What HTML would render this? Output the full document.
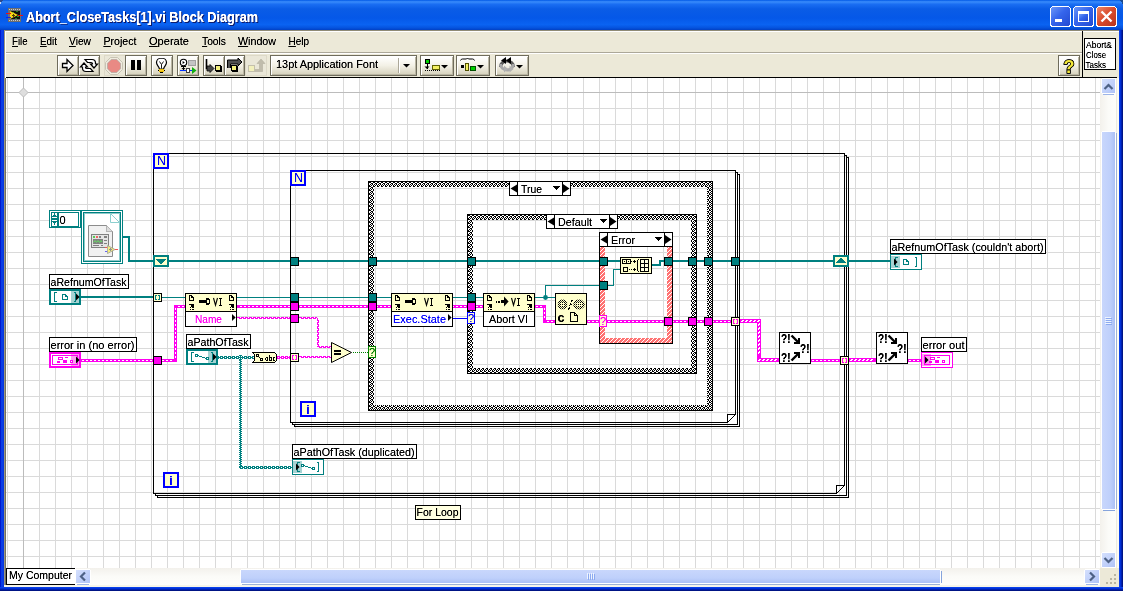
<!DOCTYPE html>
<html><head><meta charset="utf-8"><title>Abort_CloseTasks[1].vi Block Diagram</title>
<style>
html,body{margin:0;padding:0;background:#fff;overflow:hidden}
body{width:1123px;height:591px;position:relative;font-family:"Liberation Sans",sans-serif}
svg{position:absolute;left:0;top:0;font-family:"Liberation Sans",sans-serif}
svg rect{shape-rendering:crispEdges}
svg text{filter:url(#tf)}
</style></head><body>
<svg width="1123" height="591" viewBox="0 0 1123 591">
<defs>
<filter id="tf" x="-5%" y="-25%" width="110%" height="150%"><feComponentTransfer><feFuncA type="linear" slope="1.3" intercept="0"/></feComponentTransfer></filter>
<linearGradient id="tb" x1="0" y1="0" x2="0" y2="1"><stop offset="0" stop-color="#0058E6"/><stop offset="0.06" stop-color="#3A8CFB"/><stop offset="0.14" stop-color="#1A6EF2"/><stop offset="0.3" stop-color="#0A5CE6"/><stop offset="0.6" stop-color="#0558E8"/><stop offset="0.82" stop-color="#0A63F2"/><stop offset="0.93" stop-color="#0553DE"/><stop offset="1" stop-color="#0140C4"/></linearGradient>
<linearGradient id="btnb" x1="0" y1="0" x2="1" y2="1"><stop offset="0" stop-color="#6F9AF8"/><stop offset="0.45" stop-color="#3565EC"/><stop offset="1" stop-color="#2248D0"/></linearGradient>
<linearGradient id="btnr" x1="0" y1="0" x2="1" y2="1"><stop offset="0" stop-color="#EE8A6C"/><stop offset="0.5" stop-color="#D8492A"/><stop offset="1" stop-color="#B5341C"/></linearGradient>
<linearGradient id="tbtn" x1="0" y1="0" x2="0" y2="1"><stop offset="0" stop-color="#FFFFFF"/><stop offset="0.5" stop-color="#F3F1E6"/><stop offset="1" stop-color="#D8D4C0"/></linearGradient>
<linearGradient id="vtrack" x1="0" y1="0" x2="1" y2="0"><stop offset="0" stop-color="#F3F1EC"/><stop offset="0.5" stop-color="#FBFBF8"/><stop offset="1" stop-color="#FEFEFB"/></linearGradient>
<linearGradient id="htrack" x1="0" y1="0" x2="0" y2="1"><stop offset="0" stop-color="#F3F1EC"/><stop offset="0.5" stop-color="#FBFBF8"/><stop offset="1" stop-color="#FEFEFB"/></linearGradient>
<linearGradient id="vthumb" x1="0" y1="0" x2="1" y2="0"><stop offset="0" stop-color="#C9D7FC"/><stop offset="0.6" stop-color="#BFD0FB"/><stop offset="1" stop-color="#A9BFF5"/></linearGradient>
<linearGradient id="hthumb" x1="0" y1="0" x2="0" y2="1"><stop offset="0" stop-color="#C9D7FC"/><stop offset="0.6" stop-color="#BFD0FB"/><stop offset="1" stop-color="#A9BFF5"/></linearGradient>
<linearGradient id="sbtn" x1="0" y1="0" x2="1" y2="1"><stop offset="0" stop-color="#D6E1FD"/><stop offset="1" stop-color="#AEC2F7"/></linearGradient>
</defs>
<rect x="0" y="0" width="1123" height="591" fill="#0831D9" />
<rect x="0" y="0" width="1123" height="30" fill="url(#tb)" />
<rect x="0" y="30" width="1" height="561" fill="#0019CF" />
<rect x="1" y="30" width="2" height="561" fill="#0A3DE6" />
<rect x="3" y="30" width="1" height="561" fill="#0838DC" />
<rect x="1119" y="30" width="1" height="561" fill="#0A40E8" />
<rect x="1120" y="30" width="1" height="561" fill="#0030D8" />
<rect x="1121" y="30" width="1" height="561" fill="#0020B0" />
<rect x="1122" y="30" width="1" height="561" fill="#001485" />
<rect x="0" y="587" width="1123" height="1" fill="#0A40E8" />
<rect x="0" y="588" width="1123" height="1" fill="#0030D8" />
<rect x="0" y="589" width="1123" height="1" fill="#0020B0" />
<rect x="0" y="590" width="1123" height="1" fill="#001485" />
<rect x="1120" y="0" width="3" height="1" fill="#1A4A90" />
<rect x="1121" y="1" width="2" height="1" fill="#1A4A90" />
<rect x="1122" y="2" width="1" height="2" fill="#1A4A90" />
<rect x="0" y="0" width="3" height="1" fill="#2A4A90" />
<rect x="0" y="1" width="2" height="1" fill="#2A4A90" />
<rect x="0" y="2" width="1" height="2" fill="#D0D8F0" />
<rect x="4" y="30" width="1115" height="557" fill="#ECE9D8" />
<rect x="4" y="30" width="1115" height="1" fill="#8F8B76" />
<rect x="4" y="30" width="1" height="556" fill="#9C9880" />
<rect x="5" y="31" width="1114" height="1" fill="#fff" />
<rect x="5" y="31" width="1" height="47" fill="#fff" />
<rect x="5" y="78" width="1" height="508" fill="#716F64" />
<rect x="8" y="8" width="13" height="14" fill="#6E6E6E" />
<rect x="10" y="11" width="10" height="8" fill="#101010" />
<rect x="9" y="9" width="1" height="1" fill="#C8C8C8" />
<rect x="9" y="20" width="1" height="1" fill="#C8C8C8" />
<rect x="11" y="9" width="1" height="1" fill="#C8C8C8" />
<rect x="11" y="20" width="1" height="1" fill="#C8C8C8" />
<rect x="13" y="9" width="1" height="1" fill="#C8C8C8" />
<rect x="13" y="20" width="1" height="1" fill="#C8C8C8" />
<rect x="15" y="9" width="1" height="1" fill="#C8C8C8" />
<rect x="15" y="20" width="1" height="1" fill="#C8C8C8" />
<rect x="17" y="9" width="1" height="1" fill="#C8C8C8" />
<rect x="17" y="20" width="1" height="1" fill="#C8C8C8" />
<rect x="19" y="9" width="1" height="1" fill="#C8C8C8" />
<rect x="19" y="20" width="1" height="1" fill="#C8C8C8" />
<rect x="13" y="12" width="1" height="1" fill="#20A020" />
<rect x="16" y="11" width="2" height="1" fill="#208020" />
<rect x="17" y="16" width="2" height="1" fill="#20A020" />
<rect x="15" y="18" width="2" height="1" fill="#208020" />
<path d="M10,11 L18,15 L10,19 Z" fill="#F8D818" stroke="none" stroke-width="1" shape-rendering="auto"/>
<rect x="13" y="14" width="1" height="3" fill="#504000" />
<rect x="12" y="15" width="3" height="1" fill="#504000" />
<rect x="6" y="13" width="5" height="1" fill="#F01010" />
<rect x="6" y="17" width="5" height="1" fill="#1020F0" />
<rect x="18" y="15" width="5" height="1" fill="#F01010" />
<text x="27" y="23" font-size="13.8" fill="#0A1F6E" font-weight="bold" text-anchor="start" textLength="232" lengthAdjust="spacingAndGlyphs" >Abort_CloseTasks[1].vi Block Diagram</text>
<text x="26" y="22" font-size="13.8" fill="#fff" font-weight="bold" text-anchor="start" textLength="232" lengthAdjust="spacingAndGlyphs" >Abort_CloseTasks[1].vi Block Diagram</text>
<rect x="1050.5" y="6.5" width="20" height="20" rx="3" ry="3" fill="url(#btnb)" stroke="#fff" stroke-width="1" shape-rendering="auto"/>
<rect x="1073.5" y="6.5" width="20" height="20" rx="3" ry="3" fill="url(#btnb)" stroke="#fff" stroke-width="1" shape-rendering="auto"/>
<rect x="1096.5" y="6.5" width="20" height="20" rx="3" ry="3" fill="url(#btnr)" stroke="#fff" stroke-width="1" shape-rendering="auto"/>
<rect x="1055" y="19" width="7" height="3" fill="#fff" />
<rect x="1078" y="11" width="11" height="11" fill="#fff" />
<rect x="1078" y="11" width="11" height="3" fill="#fff" />
<rect x="1079" y="14" width="9" height="7" fill="url(#btnb)" />
<path d="M1101.5,11.5 l10,10 M1111.5,11.5 l-10,10" fill="none" stroke="#fff" stroke-width="2.4" shape-rendering="auto"/>
<text x="12" y="45" font-size="11" fill="#000" font-weight="normal" text-anchor="start" textLength="15.5" lengthAdjust="spacingAndGlyphs" ><tspan text-decoration="underline">F</tspan>ile</text>
<text x="40" y="45" font-size="11" fill="#000" font-weight="normal" text-anchor="start" textLength="17" lengthAdjust="spacingAndGlyphs" ><tspan text-decoration="underline">E</tspan>dit</text>
<text x="69" y="45" font-size="11" fill="#000" font-weight="normal" text-anchor="start" textLength="22" lengthAdjust="spacingAndGlyphs" ><tspan text-decoration="underline">V</tspan>iew</text>
<text x="103.5" y="45" font-size="11" fill="#000" font-weight="normal" text-anchor="start" textLength="33" lengthAdjust="spacingAndGlyphs" ><tspan text-decoration="underline">P</tspan>roject</text>
<text x="149" y="45" font-size="11" fill="#000" font-weight="normal" text-anchor="start" textLength="40" lengthAdjust="spacingAndGlyphs" ><tspan text-decoration="underline">O</tspan>perate</text>
<text x="202" y="45" font-size="11" fill="#000" font-weight="normal" text-anchor="start" textLength="24" lengthAdjust="spacingAndGlyphs" ><tspan text-decoration="underline">T</tspan>ools</text>
<text x="238" y="45" font-size="11" fill="#000" font-weight="normal" text-anchor="start" textLength="38" lengthAdjust="spacingAndGlyphs" ><tspan text-decoration="underline">W</tspan>indow</text>
<text x="288.5" y="45" font-size="11" fill="#000" font-weight="normal" text-anchor="start" textLength="20.5" lengthAdjust="spacingAndGlyphs" ><tspan text-decoration="underline">H</tspan>elp</text>
<rect x="6" y="52" width="1077" height="1" fill="#ACA899" />
<rect x="6" y="53" width="1077" height="1" fill="#fff" />
<rect x="1082" y="31" width="1" height="47" fill="#000" />
<rect x="57" y="55" width="22" height="21" fill="#6F6C5C" />
<rect x="58" y="56" width="20" height="19" fill="#fff" />
<rect x="59" y="57" width="19" height="18" fill="#B9B5A2" />
<rect x="59" y="57" width="18" height="17" fill="url(#tbtn)" />
<rect x="78" y="55" width="22" height="21" fill="#6F6C5C" />
<rect x="79" y="56" width="20" height="19" fill="#fff" />
<rect x="80" y="57" width="19" height="18" fill="#B9B5A2" />
<rect x="80" y="57" width="18" height="17" fill="url(#tbtn)" />
<rect x="104" y="55" width="22" height="21" fill="#DDD9C8" />
<rect x="105" y="56" width="20" height="19" fill="#EAE7D8" />
<rect x="125" y="55" width="22" height="21" fill="#6F6C5C" />
<rect x="126" y="56" width="20" height="19" fill="#fff" />
<rect x="127" y="57" width="19" height="18" fill="#B9B5A2" />
<rect x="127" y="57" width="18" height="17" fill="url(#tbtn)" />
<rect x="151" y="55" width="22" height="21" fill="#6F6C5C" />
<rect x="152" y="56" width="20" height="19" fill="#fff" />
<rect x="153" y="57" width="19" height="18" fill="#B9B5A2" />
<rect x="153" y="57" width="18" height="17" fill="url(#tbtn)" />
<rect x="177" y="55" width="22" height="21" fill="#6F6C5C" />
<rect x="178" y="56" width="20" height="19" fill="#fff" />
<rect x="179" y="57" width="19" height="18" fill="#B9B5A2" />
<rect x="179" y="57" width="18" height="17" fill="url(#tbtn)" />
<rect x="203" y="55" width="22" height="21" fill="#6F6C5C" />
<rect x="204" y="56" width="20" height="19" fill="#fff" />
<rect x="205" y="57" width="19" height="18" fill="#B9B5A2" />
<rect x="205" y="57" width="18" height="17" fill="url(#tbtn)" />
<rect x="224" y="55" width="21" height="21" fill="#6F6C5C" />
<rect x="225" y="56" width="19" height="19" fill="#fff" />
<rect x="226" y="57" width="18" height="18" fill="#B9B5A2" />
<rect x="226" y="57" width="17" height="17" fill="url(#tbtn)" />
<rect x="245" y="55" width="22" height="21" fill="#DDD9C8" />
<rect x="246" y="56" width="20" height="19" fill="#EAE7D8" />
<rect x="270" y="55" width="147" height="21" fill="#6F6C5C" />
<rect x="271" y="56" width="145" height="19" fill="#fff" />
<rect x="272" y="57" width="144" height="18" fill="#B9B5A2" />
<rect x="272" y="57" width="143" height="17" fill="url(#tbtn)" />
<rect x="420" y="55" width="34" height="21" fill="#6F6C5C" />
<rect x="421" y="56" width="32" height="19" fill="#fff" />
<rect x="422" y="57" width="31" height="18" fill="#B9B5A2" />
<rect x="422" y="57" width="30" height="17" fill="url(#tbtn)" />
<rect x="456" y="55" width="34" height="21" fill="#6F6C5C" />
<rect x="457" y="56" width="32" height="19" fill="#fff" />
<rect x="458" y="57" width="31" height="18" fill="#B9B5A2" />
<rect x="458" y="57" width="30" height="17" fill="url(#tbtn)" />
<rect x="495" y="55" width="34" height="21" fill="#6F6C5C" />
<rect x="496" y="56" width="32" height="19" fill="#fff" />
<rect x="497" y="57" width="31" height="18" fill="#B9B5A2" />
<rect x="497" y="57" width="30" height="17" fill="url(#tbtn)" />
<rect x="1058" y="55" width="22" height="21" fill="#6F6C5C" />
<rect x="1059" y="56" width="20" height="19" fill="#fff" />
<rect x="1060" y="57" width="19" height="18" fill="#B9B5A2" />
<rect x="1060" y="57" width="18" height="17" fill="url(#tbtn)" />
<path d="M62.5,63.5 H67 V59.5 L73,65.5 L67,71.5 V67.5 H62.5 Z" fill="#fff" stroke="#000" stroke-width="1.3" shape-rendering="auto" stroke-linejoin="miter"/>
<path d="M85,59.5 H92 Q95.5,59.5 95.5,63 V64 H97.5 L94,68 L90.5,64 H92.5 V63.5 Q92.5,62.5 91,62.5 H87.5 Z" fill="#fff" stroke="#000" stroke-width="1.2" shape-rendering="auto"/>
<path d="M85,59.5 H92 Q95.5,59.5 95.5,63 V64 H97.5 L94,68 L90.5,64 H92.5 V63.5 Q92.5,62.5 91,62.5 H87.5 Z" fill="#fff" stroke="#000" stroke-width="1.2" shape-rendering="auto" transform="rotate(180 89 65.5)"/>
<path d="M110.5,57.5 h7 l5,5 v7 l-5,5 h-7 l-5,-5 v-7 z" fill="#EFECDF" stroke="#C8C4B4" stroke-width="1" shape-rendering="auto"/>
<path d="M111.3,59.5 h5.4 l3.8,3.8 v5.4 l-3.8,3.8 h-5.4 l-3.8,-3.8 v-5.4 z" fill="#E98A84" stroke="#B0A8A0" stroke-width="0.7" shape-rendering="auto"/>
<rect x="131" y="60" width="4" height="10" fill="#000" />
<rect x="137" y="60" width="4" height="10" fill="#000" />
<path d="M161.5,58 c-3.2,0 -5,2.2 -5,4.6 c0,2.6 2.6,3.6 2.9,6.4 h4.2 c0.3,-2.8 2.9,-3.8 2.9,-6.4 c0,-2.4 -1.8,-4.6 -5,-4.6 z" fill="#fff" stroke="#000" stroke-width="1.2" shape-rendering="auto"/>
<path d="M159.5,61.5 l2,3 l2,-3 M161.5,64.5 v4" fill="none" stroke="#000" stroke-width="0.9" shape-rendering="auto"/>
<rect x="159" y="69" width="5" height="1" fill="#E8B800" />
<rect x="159" y="70" width="5" height="1" fill="#F8D030" />
<rect x="159" y="71" width="5" height="1" fill="#E8B800" />
<rect x="160" y="72" width="3" height="1" fill="#000" />
<rect x="158" y="70" width="1" height="1" fill="#000" />
<rect x="164" y="70" width="1" height="1" fill="#000" />
<circle cx="183.5" cy="62.5" r="3.2" fill="#fff" stroke="#000" stroke-width="1.1"/>
<path d="M182.6,61 l2.2,1.5 l-2.2,1.5 z" fill="#000" stroke="none" stroke-width="1" />
<rect x="183" y="66" width="1" height="4" fill="#000" />
<rect x="181" y="66" width="5" height="1" fill="#000" />
<path d="M181.5,68 l2,2 l2,-2 z" fill="#000" stroke="none" stroke-width="1" />
<rect x="188" y="60" width="8" height="6" fill="#A0A0A0" />
<rect x="189" y="61" width="6" height="4" fill="#C4C4C4" />
<rect x="180" y="70" width="7" height="1" fill="#0030FF" />
<rect x="186" y="68" width="4" height="5" fill="#404040" />
<rect x="187" y="69" width="2" height="3" fill="#fff" />
<rect x="190" y="70" width="4" height="1" fill="#0030FF" />
<path d="M192,67 l4.5,3.5 l-4.5,3.5 z" fill="#10B010" stroke="none" stroke-width="1" />
<path d="M206.5,59 V68.5 H210" fill="none" stroke="#000" stroke-width="1.6" shape-rendering="auto"/>
<path d="M207,66 H210 V64.5 L214,68.5 L210,72.5 V71 H207 Z" fill="#484848" stroke="#000" stroke-width="0.8" shape-rendering="auto"/>
<rect x="216" y="66" width="6" height="6" fill="#000" />
<rect x="215" y="65" width="6" height="6" fill="#000" />
<rect x="216" y="66" width="4" height="4" fill="#F4F07C" />
<path d="M227.5,68 V60 H238 V58 L242,62 L238,66 V64 H230.5 V68" fill="#505050" stroke="#000" stroke-width="1" shape-rendering="auto"/>
<rect x="232" y="66" width="6" height="6" fill="#000" />
<rect x="231" y="65" width="6" height="6" fill="#000" />
<rect x="232" y="66" width="4" height="4" fill="#F4F07C" />
<rect x="248" y="65" width="7" height="7" fill="#C4C0AC" />
<rect x="249" y="66" width="5" height="5" fill="#F2F0BC" />
<path d="M255,69.5 h4.5 v-6 h-2.5 l4,-4.5 l4,4.5 h-2.5 v8 h-7.5" fill="#C0BCAC" stroke="#B4B0A0" stroke-width="0.6" shape-rendering="auto"/>
<text x="276" y="68" font-size="11" fill="#000" font-weight="normal" text-anchor="start" textLength="102" lengthAdjust="spacingAndGlyphs" >13pt Application Font</text>
<rect x="398" y="58" width="1" height="15" fill="#ACA899" />
<rect x="399" y="58" width="1" height="15" fill="#fff" />
<path d="M403,64 h7 l-3.5,3.5 z" fill="#000" stroke="none" stroke-width="1" />
<rect x="425" y="59" width="5" height="5" fill="#000" />
<rect x="426" y="60" width="3" height="3" fill="#00D000" />
<rect x="427" y="64" width="1" height="5" fill="#000" />
<path d="M424.5,66.5 h5 l-2.5,2.5 z" fill="#000" stroke="none" stroke-width="1" />
<path d="M425,70.5 h15" fill="none" stroke="#000" stroke-width="1" stroke-dasharray="1,1"/>
<rect x="432" y="65" width="8" height="5" fill="#606000" />
<rect x="433" y="66" width="6" height="3" fill="#F4F060" />
<path d="M441,65 h7 l-3.5,3.5 z" fill="#000" stroke="none" stroke-width="1" />
<path d="M460.5,60.5 q0.5,-1.5 2,-1.5 h4 l1,-1 l1,1 h4 q1.5,0 2,1.5" fill="none" stroke="#000" stroke-width="1" shape-rendering="auto"/>
<rect x="461" y="65" width="3" height="3" fill="#000" />
<rect x="465" y="63" width="4" height="8" fill="#505000" />
<rect x="466" y="64" width="2" height="6" fill="#F4F060" />
<rect x="470" y="66" width="6" height="5" fill="#005000" />
<rect x="471" y="67" width="4" height="3" fill="#00D000" />
<path d="M477,65 h7 l-3.5,3.5 z" fill="#000" stroke="none" stroke-width="1" />
<path d="M500.5,67 A6.5,6 0 0 1 513.5,67" fill="none" stroke="#5C5C5C" stroke-width="3.2" shape-rendering="auto"/>
<path d="M500.5,64 A6.5,6 0 0 0 513.5,64" fill="none" stroke="#A8A8A8" stroke-width="3" shape-rendering="auto"/>
<path d="M506,57 L501,60.5 L506,64 Z M511,57 L506,60.5 L511,64 Z" fill="#000" stroke="none" stroke-width="1" shape-rendering="auto"/>
<path d="M504,65.5 L508,69 L504,72.5 Z M509.5,65.5 L513.5,69 L509.5,72.5 Z" fill="#B0B0B0" stroke="none" stroke-width="1" shape-rendering="auto"/>
<path d="M516,65 h7 l-3.5,3.5 z" fill="#000" stroke="none" stroke-width="1" />
<text x="1069" y="73" font-size="18" fill="#F4E838" font-weight="bold" text-anchor="middle" stroke="#000" stroke-width="1.6" paint-order="stroke">?</text>
<rect x="1084" y="38" width="32" height="32" fill="#000" />
<rect x="1085" y="39" width="30" height="30" fill="#fff" />
<text x="1086" y="48" font-size="8.4" fill="#000" font-weight="normal" text-anchor="start" textLength="26" lengthAdjust="spacingAndGlyphs" >Abort&amp;</text>
<text x="1086" y="58" font-size="8.4" fill="#000" font-weight="normal" text-anchor="start" textLength="20" lengthAdjust="spacingAndGlyphs" >Close</text>
<text x="1085.5" y="68" font-size="8.4" fill="#000" font-weight="normal" text-anchor="start" textLength="20.5" lengthAdjust="spacingAndGlyphs" >Tasks</text>
<rect x="6" y="77" width="1111" height="1" fill="#000" />
<defs>
<pattern id="grid" x="7" y="92" width="16" height="16" patternUnits="userSpaceOnUse"><rect x="0" y="0" width="16" height="1" fill="#DADADA"/><rect x="0" y="0" width="1" height="16" fill="#DADADA"/></pattern>
<pattern id="chk" x="0" y="0" width="2" height="2" patternUnits="userSpaceOnUse"><rect x="0" y="0" width="1" height="1" fill="#000"/><rect x="1" y="1" width="1" height="1" fill="#000"/></pattern>
<pattern id="chk4" x="0" y="0" width="2" height="2" patternUnits="userSpaceOnUse"><rect x="0" y="0" width="1" height="1" fill="#000"/></pattern>
<pattern id="ring" x="369" y="182" width="4" height="4" patternUnits="userSpaceOnUse"><rect width="4" height="4" fill="#fff"/><rect x="0" y="0" width="1" height="1" fill="#000"/><rect x="1" y="0" width="1" height="1" fill="#000"/><rect x="2" y="1" width="1" height="1" fill="#000"/><rect x="3" y="1" width="1" height="1" fill="#000"/><rect x="1" y="2" width="1" height="1" fill="#000"/><rect x="3" y="2" width="1" height="1" fill="#000"/><rect x="0" y="3" width="1" height="1" fill="#000"/><rect x="2" y="3" width="1" height="1" fill="#000"/></pattern>
<pattern id="ring2" x="468" y="215" width="4" height="4" patternUnits="userSpaceOnUse"><rect width="4" height="4" fill="#fff"/><rect x="0" y="0" width="1" height="1" fill="#000"/><rect x="1" y="0" width="1" height="1" fill="#000"/><rect x="2" y="1" width="1" height="1" fill="#000"/><rect x="3" y="1" width="1" height="1" fill="#000"/><rect x="1" y="2" width="1" height="1" fill="#000"/><rect x="3" y="2" width="1" height="1" fill="#000"/><rect x="0" y="3" width="1" height="1" fill="#000"/><rect x="2" y="3" width="1" height="1" fill="#000"/></pattern>
<pattern id="hatch" x="0" y="0" width="4" height="4" patternUnits="userSpaceOnUse"><rect width="4" height="4" fill="#FF7272"/><rect x="3" y="0" width="1" height="1" fill="#fff"/><rect x="2" y="1" width="1" height="1" fill="#fff"/><rect x="1" y="2" width="1" height="1" fill="#fff"/><rect x="0" y="3" width="1" height="1" fill="#fff"/></pattern>
<clipPath id="dclip"><rect x="6" y="78" width="1094" height="490"/></clipPath>
</defs>
<g clip-path="url(#dclip)">
<rect x="6" y="78" width="1094" height="490" fill="#fff" />
<rect x="6" y="78" width="1094" height="490" fill="url(#grid)" />
<rect x="6" y="92" width="1094" height="1" fill="#BCBCBC" />
<rect x="23" y="78" width="1" height="490" fill="#BCBCBC" />
<path d="M23.5,88 L28,92.5 L23.5,97 L19,92.5 Z" fill="#DEDEDE" stroke="#BCBCBC" stroke-width="1" shape-rendering="auto"/>
<rect x="153" y="153" width="692" height="1" fill="#000" />
<rect x="153" y="493" width="684" height="1" fill="#000" />
<rect x="153" y="153" width="1" height="341" fill="#000" />
<rect x="844" y="153" width="1" height="333" fill="#000" />
<rect x="846" y="155" width="1" height="341" fill="#000" />
<rect x="155" y="495" width="692" height="1" fill="#000" />
<rect x="844" y="155" width="3" height="1" fill="#000" />
<rect x="155" y="493" width="1" height="3" fill="#000" />
<rect x="848" y="157" width="1" height="341" fill="#000" />
<rect x="157" y="497" width="692" height="1" fill="#000" />
<rect x="846" y="157" width="3" height="1" fill="#000" />
<rect x="157" y="495" width="1" height="3" fill="#000" />
<rect x="836" y="485" width="1" height="9" fill="#000" />
<rect x="836" y="485" width="9" height="1" fill="#000" />
<rect x="843" y="486" width="1" height="1" fill="#000" />
<rect x="842" y="487" width="1" height="1" fill="#000" />
<rect x="841" y="488" width="1" height="1" fill="#000" />
<rect x="840" y="489" width="1" height="1" fill="#000" />
<rect x="839" y="490" width="1" height="1" fill="#000" />
<rect x="838" y="491" width="1" height="1" fill="#000" />
<rect x="837" y="492" width="1" height="1" fill="#000" />
<rect x="290" y="170" width="446" height="1" fill="#000" />
<rect x="290" y="422" width="438" height="1" fill="#000" />
<rect x="290" y="170" width="1" height="253" fill="#000" />
<rect x="735" y="170" width="1" height="245" fill="#000" />
<rect x="737" y="172" width="1" height="253" fill="#000" />
<rect x="292" y="424" width="446" height="1" fill="#000" />
<rect x="735" y="172" width="3" height="1" fill="#000" />
<rect x="292" y="422" width="1" height="3" fill="#000" />
<rect x="739" y="174" width="1" height="253" fill="#000" />
<rect x="294" y="426" width="446" height="1" fill="#000" />
<rect x="737" y="174" width="3" height="1" fill="#000" />
<rect x="294" y="424" width="1" height="3" fill="#000" />
<rect x="727" y="414" width="1" height="9" fill="#000" />
<rect x="727" y="414" width="9" height="1" fill="#000" />
<rect x="734" y="415" width="1" height="1" fill="#000" />
<rect x="733" y="416" width="1" height="1" fill="#000" />
<rect x="732" y="417" width="1" height="1" fill="#000" />
<rect x="731" y="418" width="1" height="1" fill="#000" />
<rect x="730" y="419" width="1" height="1" fill="#000" />
<rect x="729" y="420" width="1" height="1" fill="#000" />
<rect x="728" y="421" width="1" height="1" fill="#000" />
<path fill-rule="evenodd" fill="url(#ring)" d="M368,181h345v230h-345z M374,187h333v218h-333z"/>
<rect x="368" y="181" width="345" height="1" fill="#000" />
<rect x="368" y="410" width="345" height="1" fill="#000" />
<rect x="368" y="181" width="1" height="230" fill="#000" />
<rect x="712" y="181" width="1" height="230" fill="#000" />
<path fill-rule="evenodd" fill="url(#ring2)" d="M467,214h230v160h-230z M473,220h218v148h-218z"/>
<rect x="467" y="214" width="230" height="1" fill="#000" />
<rect x="467" y="373" width="230" height="1" fill="#000" />
<rect x="467" y="214" width="1" height="160" fill="#000" />
<rect x="696" y="214" width="1" height="160" fill="#000" />
<path fill-rule="evenodd" fill="url(#hatch)" d="M599,232h74v112h-74z M605,238h62v100h-62z"/>
<rect x="599" y="232" width="74" height="1" fill="#000" />
<rect x="599" y="343" width="74" height="1" fill="#000" />
<rect x="599" y="232" width="1" height="112" fill="#000" />
<rect x="672" y="232" width="1" height="112" fill="#000" />
<rect x="153" y="153" width="16" height="16" fill="#0000FF" />
<rect x="155" y="155" width="12" height="12" fill="#FFFFCC" />
<text x="161.5" y="165" font-size="12.5" fill="#0000FF" font-weight="normal" text-anchor="middle" >N</text>
<rect x="290" y="170" width="16" height="16" fill="#0000FF" />
<rect x="292" y="172" width="12" height="12" fill="#FFFFCC" />
<text x="298.5" y="182" font-size="12.5" fill="#0000FF" font-weight="normal" text-anchor="middle" >N</text>
<rect x="163" y="472" width="16" height="16" fill="#0000FF" />
<rect x="165" y="474" width="12" height="12" fill="#FFFFCC" />
<text x="171" y="484.5" font-size="12" fill="#0000FF" font-weight="bold" text-anchor="middle" >i</text>
<rect x="300" y="401" width="16" height="16" fill="#0000FF" />
<rect x="302" y="403" width="12" height="12" fill="#FFFFCC" />
<text x="308" y="413.5" font-size="12" fill="#0000FF" font-weight="bold" text-anchor="middle" >i</text>
<rect x="123" y="236" width="7" height="2" fill="#008080" />
<rect x="128" y="236" width="2" height="26" fill="#008080" />
<rect x="128" y="260" width="26" height="2" fill="#008080" />
<rect x="168" y="260" width="453" height="2" fill="#008080" />
<rect x="651" y="264" width="10" height="2" fill="#008080" />
<rect x="659" y="260" width="2" height="6" fill="#008080" />
<rect x="659" y="260" width="232" height="2" fill="#008080" />
<rect x="81" y="296" width="73" height="2" fill="#008080" />
<rect x="161" y="297" width="395" height="1" fill="#008080" />
<rect x="545" y="285" width="1" height="13" fill="#008080" />
<rect x="545" y="285" width="56" height="1" fill="#008080" />
<circle cx="545.5" cy="297.5" r="2.4" fill="#008080"/>
<rect x="607" y="285" width="7" height="1" fill="#008080" />
<rect x="613" y="269" width="1" height="17" fill="#008080" />
<rect x="613" y="269" width="8" height="1" fill="#008080" />
<rect x="81" y="359" width="73" height="3" fill="#FF00F0" />
<rect x="82" y="360" width="2" height="1" fill="#fff" />
<rect x="86" y="360" width="2" height="1" fill="#fff" />
<rect x="90" y="360" width="2" height="1" fill="#fff" />
<rect x="94" y="360" width="2" height="1" fill="#fff" />
<rect x="98" y="360" width="2" height="1" fill="#fff" />
<rect x="102" y="360" width="2" height="1" fill="#fff" />
<rect x="106" y="360" width="2" height="1" fill="#fff" />
<rect x="110" y="360" width="2" height="1" fill="#fff" />
<rect x="114" y="360" width="2" height="1" fill="#fff" />
<rect x="118" y="360" width="2" height="1" fill="#fff" />
<rect x="122" y="360" width="2" height="1" fill="#fff" />
<rect x="126" y="360" width="2" height="1" fill="#fff" />
<rect x="130" y="360" width="2" height="1" fill="#fff" />
<rect x="134" y="360" width="2" height="1" fill="#fff" />
<rect x="138" y="360" width="2" height="1" fill="#fff" />
<rect x="142" y="360" width="2" height="1" fill="#fff" />
<rect x="146" y="360" width="2" height="1" fill="#fff" />
<rect x="150" y="360" width="2" height="1" fill="#fff" />
<rect x="162" y="359" width="14" height="3" fill="#FF00F0" />
<rect x="162" y="360" width="2" height="1" fill="#fff" />
<rect x="166" y="360" width="2" height="1" fill="#fff" />
<rect x="170" y="360" width="2" height="1" fill="#fff" />
<rect x="174" y="360" width="2" height="1" fill="#fff" />
<rect x="174" y="306" width="3" height="55" fill="#FF00F0" />
<rect x="175" y="308" width="1" height="2" fill="#fff" />
<rect x="175" y="312" width="1" height="2" fill="#fff" />
<rect x="175" y="316" width="1" height="2" fill="#fff" />
<rect x="175" y="320" width="1" height="2" fill="#fff" />
<rect x="175" y="324" width="1" height="2" fill="#fff" />
<rect x="175" y="328" width="1" height="2" fill="#fff" />
<rect x="175" y="332" width="1" height="2" fill="#fff" />
<rect x="175" y="336" width="1" height="2" fill="#fff" />
<rect x="175" y="340" width="1" height="2" fill="#fff" />
<rect x="175" y="344" width="1" height="2" fill="#fff" />
<rect x="175" y="348" width="1" height="2" fill="#fff" />
<rect x="175" y="352" width="1" height="2" fill="#fff" />
<rect x="175" y="356" width="1" height="2" fill="#fff" />
<rect x="175" y="360" width="1" height="1" fill="#fff" />
<rect x="174" y="305" width="3" height="3" fill="#FF00F0" />
<rect x="177" y="305" width="9" height="3" fill="#FF00F0" />
<rect x="178" y="306" width="2" height="1" fill="#fff" />
<rect x="182" y="306" width="2" height="1" fill="#fff" />
<rect x="174" y="359" width="3" height="3" fill="#FF00F0" />
<rect x="237" y="305" width="247" height="3" fill="#FF00F0" />
<rect x="240" y="306" width="2" height="1" fill="#fff" />
<rect x="244" y="306" width="2" height="1" fill="#fff" />
<rect x="248" y="306" width="2" height="1" fill="#fff" />
<rect x="252" y="306" width="2" height="1" fill="#fff" />
<rect x="256" y="306" width="2" height="1" fill="#fff" />
<rect x="260" y="306" width="2" height="1" fill="#fff" />
<rect x="264" y="306" width="2" height="1" fill="#fff" />
<rect x="268" y="306" width="2" height="1" fill="#fff" />
<rect x="272" y="306" width="2" height="1" fill="#fff" />
<rect x="276" y="306" width="2" height="1" fill="#fff" />
<rect x="280" y="306" width="2" height="1" fill="#fff" />
<rect x="284" y="306" width="2" height="1" fill="#fff" />
<rect x="288" y="306" width="2" height="1" fill="#fff" />
<rect x="292" y="306" width="2" height="1" fill="#fff" />
<rect x="296" y="306" width="2" height="1" fill="#fff" />
<rect x="300" y="306" width="2" height="1" fill="#fff" />
<rect x="304" y="306" width="2" height="1" fill="#fff" />
<rect x="308" y="306" width="2" height="1" fill="#fff" />
<rect x="312" y="306" width="2" height="1" fill="#fff" />
<rect x="316" y="306" width="2" height="1" fill="#fff" />
<rect x="320" y="306" width="2" height="1" fill="#fff" />
<rect x="324" y="306" width="2" height="1" fill="#fff" />
<rect x="328" y="306" width="2" height="1" fill="#fff" />
<rect x="332" y="306" width="2" height="1" fill="#fff" />
<rect x="336" y="306" width="2" height="1" fill="#fff" />
<rect x="340" y="306" width="2" height="1" fill="#fff" />
<rect x="344" y="306" width="2" height="1" fill="#fff" />
<rect x="348" y="306" width="2" height="1" fill="#fff" />
<rect x="352" y="306" width="2" height="1" fill="#fff" />
<rect x="356" y="306" width="2" height="1" fill="#fff" />
<rect x="360" y="306" width="2" height="1" fill="#fff" />
<rect x="364" y="306" width="2" height="1" fill="#fff" />
<rect x="368" y="306" width="2" height="1" fill="#fff" />
<rect x="372" y="306" width="2" height="1" fill="#fff" />
<rect x="376" y="306" width="2" height="1" fill="#fff" />
<rect x="380" y="306" width="2" height="1" fill="#fff" />
<rect x="384" y="306" width="2" height="1" fill="#fff" />
<rect x="388" y="306" width="2" height="1" fill="#fff" />
<rect x="392" y="306" width="2" height="1" fill="#fff" />
<rect x="396" y="306" width="2" height="1" fill="#fff" />
<rect x="400" y="306" width="2" height="1" fill="#fff" />
<rect x="404" y="306" width="2" height="1" fill="#fff" />
<rect x="408" y="306" width="2" height="1" fill="#fff" />
<rect x="412" y="306" width="2" height="1" fill="#fff" />
<rect x="416" y="306" width="2" height="1" fill="#fff" />
<rect x="420" y="306" width="2" height="1" fill="#fff" />
<rect x="424" y="306" width="2" height="1" fill="#fff" />
<rect x="428" y="306" width="2" height="1" fill="#fff" />
<rect x="432" y="306" width="2" height="1" fill="#fff" />
<rect x="436" y="306" width="2" height="1" fill="#fff" />
<rect x="440" y="306" width="2" height="1" fill="#fff" />
<rect x="444" y="306" width="2" height="1" fill="#fff" />
<rect x="448" y="306" width="2" height="1" fill="#fff" />
<rect x="452" y="306" width="2" height="1" fill="#fff" />
<rect x="456" y="306" width="2" height="1" fill="#fff" />
<rect x="460" y="306" width="2" height="1" fill="#fff" />
<rect x="464" y="306" width="2" height="1" fill="#fff" />
<rect x="468" y="306" width="2" height="1" fill="#fff" />
<rect x="472" y="306" width="2" height="1" fill="#fff" />
<rect x="476" y="306" width="2" height="1" fill="#fff" />
<rect x="480" y="306" width="2" height="1" fill="#fff" />
<rect x="535" y="305" width="11" height="3" fill="#FF00F0" />
<rect x="536" y="306" width="2" height="1" fill="#fff" />
<rect x="540" y="306" width="2" height="1" fill="#fff" />
<rect x="544" y="306" width="2" height="1" fill="#fff" />
<rect x="543" y="306" width="3" height="16" fill="#FF00F0" />
<rect x="544" y="308" width="1" height="2" fill="#fff" />
<rect x="544" y="312" width="1" height="2" fill="#fff" />
<rect x="544" y="316" width="1" height="2" fill="#fff" />
<rect x="544" y="320" width="1" height="2" fill="#fff" />
<rect x="543" y="305" width="3" height="3" fill="#FF00F0" />
<rect x="543" y="320" width="3" height="3" fill="#FF00F0" />
<rect x="546" y="320" width="10" height="3" fill="#FF00F0" />
<rect x="547" y="321" width="2" height="1" fill="#fff" />
<rect x="551" y="321" width="2" height="1" fill="#fff" />
<rect x="555" y="321" width="1" height="1" fill="#fff" />
<rect x="587" y="320" width="149" height="3" fill="#FF00F0" />
<rect x="588" y="321" width="2" height="1" fill="#fff" />
<rect x="592" y="321" width="2" height="1" fill="#fff" />
<rect x="596" y="321" width="2" height="1" fill="#fff" />
<rect x="600" y="321" width="2" height="1" fill="#fff" />
<rect x="604" y="321" width="2" height="1" fill="#fff" />
<rect x="608" y="321" width="2" height="1" fill="#fff" />
<rect x="612" y="321" width="2" height="1" fill="#fff" />
<rect x="616" y="321" width="2" height="1" fill="#fff" />
<rect x="620" y="321" width="2" height="1" fill="#fff" />
<rect x="624" y="321" width="2" height="1" fill="#fff" />
<rect x="628" y="321" width="2" height="1" fill="#fff" />
<rect x="632" y="321" width="2" height="1" fill="#fff" />
<rect x="636" y="321" width="2" height="1" fill="#fff" />
<rect x="640" y="321" width="2" height="1" fill="#fff" />
<rect x="644" y="321" width="2" height="1" fill="#fff" />
<rect x="648" y="321" width="2" height="1" fill="#fff" />
<rect x="652" y="321" width="2" height="1" fill="#fff" />
<rect x="656" y="321" width="2" height="1" fill="#fff" />
<rect x="660" y="321" width="2" height="1" fill="#fff" />
<rect x="664" y="321" width="2" height="1" fill="#fff" />
<rect x="668" y="321" width="2" height="1" fill="#fff" />
<rect x="672" y="321" width="2" height="1" fill="#fff" />
<rect x="676" y="321" width="2" height="1" fill="#fff" />
<rect x="680" y="321" width="2" height="1" fill="#fff" />
<rect x="684" y="321" width="2" height="1" fill="#fff" />
<rect x="688" y="321" width="2" height="1" fill="#fff" />
<rect x="692" y="321" width="2" height="1" fill="#fff" />
<rect x="696" y="321" width="2" height="1" fill="#fff" />
<rect x="700" y="321" width="2" height="1" fill="#fff" />
<rect x="704" y="321" width="2" height="1" fill="#fff" />
<rect x="708" y="321" width="2" height="1" fill="#fff" />
<rect x="712" y="321" width="2" height="1" fill="#fff" />
<rect x="716" y="321" width="2" height="1" fill="#fff" />
<rect x="720" y="321" width="2" height="1" fill="#fff" />
<rect x="724" y="321" width="2" height="1" fill="#fff" />
<rect x="728" y="321" width="2" height="1" fill="#fff" />
<rect x="732" y="321" width="2" height="1" fill="#fff" />
<rect x="757" y="323" width="4" height="35" fill="#FF00F0" />
<rect x="759" y="323" width="1" height="2" fill="#fff" />
<rect x="758" y="324" width="1" height="2" fill="#fff" />
<rect x="759" y="327" width="1" height="2" fill="#fff" />
<rect x="758" y="328" width="1" height="2" fill="#fff" />
<rect x="759" y="331" width="1" height="2" fill="#fff" />
<rect x="758" y="332" width="1" height="2" fill="#fff" />
<rect x="759" y="335" width="1" height="2" fill="#fff" />
<rect x="758" y="336" width="1" height="2" fill="#fff" />
<rect x="759" y="339" width="1" height="2" fill="#fff" />
<rect x="758" y="340" width="1" height="2" fill="#fff" />
<rect x="759" y="343" width="1" height="2" fill="#fff" />
<rect x="758" y="344" width="1" height="2" fill="#fff" />
<rect x="759" y="347" width="1" height="2" fill="#fff" />
<rect x="758" y="348" width="1" height="2" fill="#fff" />
<rect x="759" y="351" width="1" height="2" fill="#fff" />
<rect x="758" y="352" width="1" height="2" fill="#fff" />
<rect x="740" y="319" width="21" height="4" fill="#FF00F0" />
<rect x="741" y="321" width="2" height="1" fill="#fff" />
<rect x="742" y="320" width="2" height="1" fill="#fff" />
<rect x="745" y="321" width="2" height="1" fill="#fff" />
<rect x="746" y="320" width="2" height="1" fill="#fff" />
<rect x="749" y="321" width="2" height="1" fill="#fff" />
<rect x="750" y="320" width="2" height="1" fill="#fff" />
<rect x="753" y="321" width="2" height="1" fill="#fff" />
<rect x="754" y="320" width="2" height="1" fill="#fff" />
<rect x="757" y="321" width="2" height="1" fill="#fff" />
<rect x="758" y="320" width="2" height="1" fill="#fff" />
<rect x="757" y="358" width="22" height="4" fill="#FF00F0" />
<rect x="758" y="360" width="2" height="1" fill="#fff" />
<rect x="759" y="359" width="2" height="1" fill="#fff" />
<rect x="762" y="360" width="2" height="1" fill="#fff" />
<rect x="763" y="359" width="2" height="1" fill="#fff" />
<rect x="766" y="360" width="2" height="1" fill="#fff" />
<rect x="767" y="359" width="2" height="1" fill="#fff" />
<rect x="770" y="360" width="2" height="1" fill="#fff" />
<rect x="771" y="359" width="2" height="1" fill="#fff" />
<rect x="774" y="360" width="2" height="1" fill="#fff" />
<rect x="775" y="359" width="2" height="1" fill="#fff" />
<rect x="811" y="359" width="30" height="3" fill="#FF00F0" />
<rect x="812" y="360" width="2" height="1" fill="#fff" />
<rect x="816" y="360" width="2" height="1" fill="#fff" />
<rect x="820" y="360" width="2" height="1" fill="#fff" />
<rect x="824" y="360" width="2" height="1" fill="#fff" />
<rect x="828" y="360" width="2" height="1" fill="#fff" />
<rect x="832" y="360" width="2" height="1" fill="#fff" />
<rect x="836" y="360" width="2" height="1" fill="#fff" />
<rect x="840" y="360" width="1" height="1" fill="#fff" />
<rect x="849" y="358" width="27" height="4" fill="#FF00F0" />
<rect x="850" y="360" width="2" height="1" fill="#fff" />
<rect x="851" y="359" width="2" height="1" fill="#fff" />
<rect x="854" y="360" width="2" height="1" fill="#fff" />
<rect x="855" y="359" width="2" height="1" fill="#fff" />
<rect x="858" y="360" width="2" height="1" fill="#fff" />
<rect x="859" y="359" width="2" height="1" fill="#fff" />
<rect x="862" y="360" width="2" height="1" fill="#fff" />
<rect x="863" y="359" width="2" height="1" fill="#fff" />
<rect x="866" y="360" width="2" height="1" fill="#fff" />
<rect x="867" y="359" width="2" height="1" fill="#fff" />
<rect x="870" y="360" width="2" height="1" fill="#fff" />
<rect x="871" y="359" width="2" height="1" fill="#fff" />
<rect x="908" y="359" width="14" height="3" fill="#FF00F0" />
<rect x="909" y="360" width="2" height="1" fill="#fff" />
<rect x="913" y="360" width="2" height="1" fill="#fff" />
<rect x="917" y="360" width="2" height="1" fill="#fff" />
<rect x="921" y="360" width="1" height="1" fill="#fff" />
<path d="M237,317.5h2v1h2v-1h2v1h2v-1h2v1h2v-1h2v1h2v-1h2v1h2v-1h2v1h2v-1h2v1h2v-1h2v1h2v-1h2v1h2v-1h2v1h2v-1h2v1h2v-1h2v1h2v-1h2v1h2v-1h1" fill="none" stroke="#FF00F0" stroke-width="1" shape-rendering="crispEdges"/>
<path d="M299,317.5h2v1h2v-1h2v1h2v-1h2v1h2v-1h2v1h2v-1h2" fill="none" stroke="#FF00F0" stroke-width="1" shape-rendering="crispEdges"/>
<path d="M317.5,318v2h1v2h-1v2h1v2h-1v2h1v2h-1v2h1v2h-1v2h1v2h-1v2h1v2h-1v2h1v2h-1v1" fill="none" stroke="#FF00F0" stroke-width="1" shape-rendering="crispEdges"/>
<path d="M317,346.5h2v1h2v-1h2v1h2v-1h2v1h2v-1h2" fill="none" stroke="#FF00F0" stroke-width="1" shape-rendering="crispEdges"/>
<path d="M299,356.5h2v1h2v-1h2v1h2v-1h2v1h2v-1h2v1h2v-1h2v1h2v-1h2v1h2v-1h2v1h2v-1h2v1h2" fill="none" stroke="#FF00F0" stroke-width="1" shape-rendering="crispEdges"/>
<rect x="218" y="356" width="1" height="3" fill="#008080" />
<rect x="219" y="357" width="1" height="1" fill="#008080" />
<rect x="220" y="356" width="1" height="3" fill="#008080" />
<rect x="221" y="356" width="1" height="1" fill="#008080" />
<rect x="221" y="358" width="1" height="1" fill="#008080" />
<rect x="222" y="356" width="1" height="3" fill="#008080" />
<rect x="223" y="357" width="1" height="1" fill="#008080" />
<rect x="224" y="356" width="1" height="3" fill="#008080" />
<rect x="225" y="356" width="1" height="1" fill="#008080" />
<rect x="225" y="358" width="1" height="1" fill="#008080" />
<rect x="226" y="356" width="1" height="3" fill="#008080" />
<rect x="227" y="357" width="1" height="1" fill="#008080" />
<rect x="228" y="356" width="1" height="3" fill="#008080" />
<rect x="229" y="356" width="1" height="1" fill="#008080" />
<rect x="229" y="358" width="1" height="1" fill="#008080" />
<rect x="230" y="356" width="1" height="3" fill="#008080" />
<rect x="231" y="357" width="1" height="1" fill="#008080" />
<rect x="232" y="356" width="1" height="3" fill="#008080" />
<rect x="233" y="356" width="1" height="1" fill="#008080" />
<rect x="233" y="358" width="1" height="1" fill="#008080" />
<rect x="234" y="356" width="1" height="3" fill="#008080" />
<rect x="235" y="357" width="1" height="1" fill="#008080" />
<rect x="236" y="356" width="1" height="3" fill="#008080" />
<rect x="237" y="356" width="1" height="1" fill="#008080" />
<rect x="237" y="358" width="1" height="1" fill="#008080" />
<rect x="238" y="356" width="1" height="3" fill="#008080" />
<rect x="239" y="357" width="1" height="1" fill="#008080" />
<rect x="240" y="356" width="1" height="3" fill="#008080" />
<rect x="241" y="356" width="1" height="1" fill="#008080" />
<rect x="241" y="358" width="1" height="1" fill="#008080" />
<rect x="242" y="356" width="1" height="3" fill="#008080" />
<rect x="243" y="357" width="1" height="1" fill="#008080" />
<rect x="244" y="356" width="1" height="3" fill="#008080" />
<rect x="245" y="356" width="1" height="1" fill="#008080" />
<rect x="245" y="358" width="1" height="1" fill="#008080" />
<rect x="246" y="356" width="1" height="3" fill="#008080" />
<rect x="247" y="357" width="1" height="1" fill="#008080" />
<rect x="248" y="356" width="1" height="3" fill="#008080" />
<rect x="249" y="356" width="1" height="1" fill="#008080" />
<rect x="249" y="358" width="1" height="1" fill="#008080" />
<rect x="250" y="356" width="1" height="3" fill="#008080" />
<rect x="251" y="357" width="1" height="1" fill="#008080" />
<rect x="252" y="356" width="1" height="3" fill="#008080" />
<rect x="253" y="356" width="1" height="1" fill="#008080" />
<rect x="253" y="358" width="1" height="1" fill="#008080" />
<rect x="239" y="358" width="2" height="1" fill="#008080" />
<rect x="240" y="359" width="2" height="1" fill="#008080" />
<rect x="239" y="360" width="2" height="1" fill="#008080" />
<rect x="240" y="361" width="2" height="1" fill="#008080" />
<rect x="239" y="362" width="2" height="1" fill="#008080" />
<rect x="240" y="363" width="2" height="1" fill="#008080" />
<rect x="239" y="364" width="2" height="1" fill="#008080" />
<rect x="240" y="365" width="2" height="1" fill="#008080" />
<rect x="239" y="366" width="2" height="1" fill="#008080" />
<rect x="240" y="367" width="2" height="1" fill="#008080" />
<rect x="239" y="368" width="2" height="1" fill="#008080" />
<rect x="240" y="369" width="2" height="1" fill="#008080" />
<rect x="239" y="370" width="2" height="1" fill="#008080" />
<rect x="240" y="371" width="2" height="1" fill="#008080" />
<rect x="239" y="372" width="2" height="1" fill="#008080" />
<rect x="240" y="373" width="2" height="1" fill="#008080" />
<rect x="239" y="374" width="2" height="1" fill="#008080" />
<rect x="240" y="375" width="2" height="1" fill="#008080" />
<rect x="239" y="376" width="2" height="1" fill="#008080" />
<rect x="240" y="377" width="2" height="1" fill="#008080" />
<rect x="239" y="378" width="2" height="1" fill="#008080" />
<rect x="240" y="379" width="2" height="1" fill="#008080" />
<rect x="239" y="380" width="2" height="1" fill="#008080" />
<rect x="240" y="381" width="2" height="1" fill="#008080" />
<rect x="239" y="382" width="2" height="1" fill="#008080" />
<rect x="240" y="383" width="2" height="1" fill="#008080" />
<rect x="239" y="384" width="2" height="1" fill="#008080" />
<rect x="240" y="385" width="2" height="1" fill="#008080" />
<rect x="239" y="386" width="2" height="1" fill="#008080" />
<rect x="240" y="387" width="2" height="1" fill="#008080" />
<rect x="239" y="388" width="2" height="1" fill="#008080" />
<rect x="240" y="389" width="2" height="1" fill="#008080" />
<rect x="239" y="390" width="2" height="1" fill="#008080" />
<rect x="240" y="391" width="2" height="1" fill="#008080" />
<rect x="239" y="392" width="2" height="1" fill="#008080" />
<rect x="240" y="393" width="2" height="1" fill="#008080" />
<rect x="239" y="394" width="2" height="1" fill="#008080" />
<rect x="240" y="395" width="2" height="1" fill="#008080" />
<rect x="239" y="396" width="2" height="1" fill="#008080" />
<rect x="240" y="397" width="2" height="1" fill="#008080" />
<rect x="239" y="398" width="2" height="1" fill="#008080" />
<rect x="240" y="399" width="2" height="1" fill="#008080" />
<rect x="239" y="400" width="2" height="1" fill="#008080" />
<rect x="240" y="401" width="2" height="1" fill="#008080" />
<rect x="239" y="402" width="2" height="1" fill="#008080" />
<rect x="240" y="403" width="2" height="1" fill="#008080" />
<rect x="239" y="404" width="2" height="1" fill="#008080" />
<rect x="240" y="405" width="2" height="1" fill="#008080" />
<rect x="239" y="406" width="2" height="1" fill="#008080" />
<rect x="240" y="407" width="2" height="1" fill="#008080" />
<rect x="239" y="408" width="2" height="1" fill="#008080" />
<rect x="240" y="409" width="2" height="1" fill="#008080" />
<rect x="239" y="410" width="2" height="1" fill="#008080" />
<rect x="240" y="411" width="2" height="1" fill="#008080" />
<rect x="239" y="412" width="2" height="1" fill="#008080" />
<rect x="240" y="413" width="2" height="1" fill="#008080" />
<rect x="239" y="414" width="2" height="1" fill="#008080" />
<rect x="240" y="415" width="2" height="1" fill="#008080" />
<rect x="239" y="416" width="2" height="1" fill="#008080" />
<rect x="240" y="417" width="2" height="1" fill="#008080" />
<rect x="239" y="418" width="2" height="1" fill="#008080" />
<rect x="240" y="419" width="2" height="1" fill="#008080" />
<rect x="239" y="420" width="2" height="1" fill="#008080" />
<rect x="240" y="421" width="2" height="1" fill="#008080" />
<rect x="239" y="422" width="2" height="1" fill="#008080" />
<rect x="240" y="423" width="2" height="1" fill="#008080" />
<rect x="239" y="424" width="2" height="1" fill="#008080" />
<rect x="240" y="425" width="2" height="1" fill="#008080" />
<rect x="239" y="426" width="2" height="1" fill="#008080" />
<rect x="240" y="427" width="2" height="1" fill="#008080" />
<rect x="239" y="428" width="2" height="1" fill="#008080" />
<rect x="240" y="429" width="2" height="1" fill="#008080" />
<rect x="239" y="430" width="2" height="1" fill="#008080" />
<rect x="240" y="431" width="2" height="1" fill="#008080" />
<rect x="239" y="432" width="2" height="1" fill="#008080" />
<rect x="240" y="433" width="2" height="1" fill="#008080" />
<rect x="239" y="434" width="2" height="1" fill="#008080" />
<rect x="240" y="435" width="2" height="1" fill="#008080" />
<rect x="239" y="436" width="2" height="1" fill="#008080" />
<rect x="240" y="437" width="2" height="1" fill="#008080" />
<rect x="239" y="438" width="2" height="1" fill="#008080" />
<rect x="240" y="439" width="2" height="1" fill="#008080" />
<rect x="239" y="440" width="2" height="1" fill="#008080" />
<rect x="240" y="441" width="2" height="1" fill="#008080" />
<rect x="239" y="442" width="2" height="1" fill="#008080" />
<rect x="240" y="443" width="2" height="1" fill="#008080" />
<rect x="239" y="444" width="2" height="1" fill="#008080" />
<rect x="240" y="445" width="2" height="1" fill="#008080" />
<rect x="239" y="446" width="2" height="1" fill="#008080" />
<rect x="240" y="447" width="2" height="1" fill="#008080" />
<rect x="239" y="448" width="2" height="1" fill="#008080" />
<rect x="240" y="449" width="2" height="1" fill="#008080" />
<rect x="239" y="450" width="2" height="1" fill="#008080" />
<rect x="240" y="451" width="2" height="1" fill="#008080" />
<rect x="239" y="452" width="2" height="1" fill="#008080" />
<rect x="240" y="453" width="2" height="1" fill="#008080" />
<rect x="239" y="454" width="2" height="1" fill="#008080" />
<rect x="240" y="455" width="2" height="1" fill="#008080" />
<rect x="239" y="456" width="2" height="1" fill="#008080" />
<rect x="240" y="457" width="2" height="1" fill="#008080" />
<rect x="239" y="458" width="2" height="1" fill="#008080" />
<rect x="240" y="459" width="2" height="1" fill="#008080" />
<rect x="239" y="460" width="2" height="1" fill="#008080" />
<rect x="240" y="461" width="2" height="1" fill="#008080" />
<rect x="239" y="462" width="2" height="1" fill="#008080" />
<rect x="240" y="463" width="2" height="1" fill="#008080" />
<rect x="239" y="464" width="2" height="1" fill="#008080" />
<rect x="240" y="465" width="2" height="1" fill="#008080" />
<rect x="239" y="466" width="2" height="1" fill="#008080" />
<rect x="239" y="467" width="1" height="1" fill="#008080" />
<rect x="240" y="466" width="1" height="3" fill="#008080" />
<rect x="241" y="466" width="1" height="1" fill="#008080" />
<rect x="241" y="468" width="1" height="1" fill="#008080" />
<rect x="242" y="466" width="1" height="3" fill="#008080" />
<rect x="243" y="467" width="1" height="1" fill="#008080" />
<rect x="244" y="466" width="1" height="3" fill="#008080" />
<rect x="245" y="466" width="1" height="1" fill="#008080" />
<rect x="245" y="468" width="1" height="1" fill="#008080" />
<rect x="246" y="466" width="1" height="3" fill="#008080" />
<rect x="247" y="467" width="1" height="1" fill="#008080" />
<rect x="248" y="466" width="1" height="3" fill="#008080" />
<rect x="249" y="466" width="1" height="1" fill="#008080" />
<rect x="249" y="468" width="1" height="1" fill="#008080" />
<rect x="250" y="466" width="1" height="3" fill="#008080" />
<rect x="251" y="467" width="1" height="1" fill="#008080" />
<rect x="252" y="466" width="1" height="3" fill="#008080" />
<rect x="253" y="466" width="1" height="1" fill="#008080" />
<rect x="253" y="468" width="1" height="1" fill="#008080" />
<rect x="254" y="466" width="1" height="3" fill="#008080" />
<rect x="255" y="467" width="1" height="1" fill="#008080" />
<rect x="256" y="466" width="1" height="3" fill="#008080" />
<rect x="257" y="466" width="1" height="1" fill="#008080" />
<rect x="257" y="468" width="1" height="1" fill="#008080" />
<rect x="258" y="466" width="1" height="3" fill="#008080" />
<rect x="259" y="467" width="1" height="1" fill="#008080" />
<rect x="260" y="466" width="1" height="3" fill="#008080" />
<rect x="261" y="466" width="1" height="1" fill="#008080" />
<rect x="261" y="468" width="1" height="1" fill="#008080" />
<rect x="262" y="466" width="1" height="3" fill="#008080" />
<rect x="263" y="467" width="1" height="1" fill="#008080" />
<rect x="264" y="466" width="1" height="3" fill="#008080" />
<rect x="265" y="466" width="1" height="1" fill="#008080" />
<rect x="265" y="468" width="1" height="1" fill="#008080" />
<rect x="266" y="466" width="1" height="3" fill="#008080" />
<rect x="267" y="467" width="1" height="1" fill="#008080" />
<rect x="268" y="466" width="1" height="3" fill="#008080" />
<rect x="269" y="466" width="1" height="1" fill="#008080" />
<rect x="269" y="468" width="1" height="1" fill="#008080" />
<rect x="270" y="466" width="1" height="3" fill="#008080" />
<rect x="271" y="467" width="1" height="1" fill="#008080" />
<rect x="272" y="466" width="1" height="3" fill="#008080" />
<rect x="273" y="466" width="1" height="1" fill="#008080" />
<rect x="273" y="468" width="1" height="1" fill="#008080" />
<rect x="274" y="466" width="1" height="3" fill="#008080" />
<rect x="275" y="467" width="1" height="1" fill="#008080" />
<rect x="276" y="466" width="1" height="3" fill="#008080" />
<rect x="277" y="466" width="1" height="1" fill="#008080" />
<rect x="277" y="468" width="1" height="1" fill="#008080" />
<rect x="278" y="466" width="1" height="3" fill="#008080" />
<rect x="279" y="467" width="1" height="1" fill="#008080" />
<rect x="280" y="466" width="1" height="3" fill="#008080" />
<rect x="281" y="466" width="1" height="1" fill="#008080" />
<rect x="281" y="468" width="1" height="1" fill="#008080" />
<rect x="282" y="466" width="1" height="3" fill="#008080" />
<rect x="283" y="467" width="1" height="1" fill="#008080" />
<rect x="284" y="466" width="1" height="3" fill="#008080" />
<rect x="285" y="466" width="1" height="1" fill="#008080" />
<rect x="285" y="468" width="1" height="1" fill="#008080" />
<rect x="286" y="466" width="1" height="3" fill="#008080" />
<rect x="287" y="467" width="1" height="1" fill="#008080" />
<rect x="288" y="466" width="1" height="3" fill="#008080" />
<rect x="289" y="466" width="1" height="1" fill="#008080" />
<rect x="289" y="468" width="1" height="1" fill="#008080" />
<rect x="290" y="466" width="1" height="3" fill="#008080" />
<rect x="291" y="467" width="1" height="1" fill="#008080" />
<rect x="292" y="466" width="1" height="3" fill="#008080" />
<rect x="239" y="355" width="3" height="5" fill="#008080" />
<rect x="238" y="356" width="5" height="3" fill="#008080" />
<rect x="239" y="356" width="1" height="1" fill="#fff" />
<rect x="241" y="356" width="1" height="1" fill="#fff" />
<rect x="239" y="358" width="1" height="1" fill="#fff" />
<rect x="241" y="358" width="1" height="1" fill="#fff" />
<rect x="277" y="356" width="1" height="3" fill="#FF00F0" />
<rect x="278" y="356" width="1" height="1" fill="#FF00F0" />
<rect x="278" y="358" width="1" height="1" fill="#FF00F0" />
<rect x="279" y="356" width="1" height="3" fill="#FF00F0" />
<rect x="280" y="357" width="1" height="1" fill="#FF00F0" />
<rect x="281" y="356" width="1" height="3" fill="#FF00F0" />
<rect x="282" y="356" width="1" height="1" fill="#FF00F0" />
<rect x="282" y="358" width="1" height="1" fill="#FF00F0" />
<rect x="283" y="356" width="1" height="3" fill="#FF00F0" />
<rect x="284" y="357" width="1" height="1" fill="#FF00F0" />
<rect x="285" y="356" width="1" height="3" fill="#FF00F0" />
<rect x="286" y="356" width="1" height="1" fill="#FF00F0" />
<rect x="286" y="358" width="1" height="1" fill="#FF00F0" />
<rect x="287" y="356" width="1" height="3" fill="#FF00F0" />
<rect x="288" y="357" width="1" height="1" fill="#FF00F0" />
<rect x="289" y="356" width="1" height="3" fill="#FF00F0" />
<rect x="290" y="356" width="1" height="1" fill="#FF00F0" />
<rect x="290" y="358" width="1" height="1" fill="#FF00F0" />
<rect x="353" y="352" width="1" height="1" fill="#008000" />
<rect x="355" y="352" width="1" height="1" fill="#008000" />
<rect x="357" y="352" width="1" height="1" fill="#008000" />
<rect x="359" y="352" width="1" height="1" fill="#008000" />
<rect x="361" y="352" width="1" height="1" fill="#008000" />
<rect x="363" y="352" width="1" height="1" fill="#008000" />
<rect x="365" y="352" width="1" height="1" fill="#008000" />
<rect x="367" y="352" width="1" height="1" fill="#008000" />
<rect x="453" y="318" width="15" height="1" fill="#0000FF" />
<rect x="290" y="257" width="9" height="9" fill="#000" />
<rect x="291" y="258" width="7" height="7" fill="#008080" />
<rect x="368" y="257" width="9" height="9" fill="#000" />
<rect x="369" y="258" width="7" height="7" fill="#008080" />
<rect x="467" y="257" width="9" height="9" fill="#000" />
<rect x="468" y="258" width="7" height="7" fill="#008080" />
<rect x="599" y="257" width="9" height="9" fill="#000" />
<rect x="600" y="258" width="7" height="7" fill="#008080" />
<rect x="664" y="257" width="9" height="9" fill="#000" />
<rect x="665" y="258" width="7" height="7" fill="#008080" />
<rect x="688" y="257" width="9" height="9" fill="#000" />
<rect x="689" y="258" width="7" height="7" fill="#008080" />
<rect x="704" y="257" width="9" height="9" fill="#000" />
<rect x="705" y="258" width="7" height="7" fill="#008080" />
<rect x="731" y="257" width="9" height="9" fill="#000" />
<rect x="732" y="258" width="7" height="7" fill="#008080" />
<rect x="290" y="293" width="9" height="9" fill="#000" />
<rect x="291" y="294" width="7" height="7" fill="#008080" />
<rect x="290" y="302" width="9" height="9" fill="#000" />
<rect x="291" y="303" width="7" height="7" fill="#FF00F0" />
<rect x="368" y="293" width="9" height="9" fill="#000" />
<rect x="369" y="294" width="7" height="7" fill="#008080" />
<rect x="368" y="302" width="9" height="9" fill="#000" />
<rect x="369" y="303" width="7" height="7" fill="#FF00F0" />
<rect x="467" y="293" width="9" height="9" fill="#000" />
<rect x="468" y="294" width="7" height="7" fill="#008080" />
<rect x="467" y="302" width="9" height="9" fill="#000" />
<rect x="468" y="303" width="7" height="7" fill="#FF00F0" />
<rect x="290" y="314" width="9" height="9" fill="#000" />
<rect x="291" y="315" width="7" height="7" fill="#FF00F0" />
<rect x="599" y="281" width="9" height="9" fill="#000" />
<rect x="600" y="282" width="7" height="7" fill="#008080" />
<rect x="153" y="356" width="9" height="9" fill="#000" />
<rect x="154" y="357" width="7" height="7" fill="#FF00F0" />
<rect x="664" y="317" width="9" height="9" fill="#000" />
<rect x="665" y="318" width="7" height="7" fill="#FF00F0" />
<rect x="688" y="317" width="9" height="9" fill="#000" />
<rect x="689" y="318" width="7" height="7" fill="#FF00F0" />
<rect x="704" y="317" width="9" height="9" fill="#000" />
<rect x="705" y="318" width="7" height="7" fill="#FF00F0" />
<rect x="153" y="293" width="9" height="9" fill="#000" />
<rect x="154" y="294" width="7" height="7" fill="#FFFFCC" />
<rect x="155" y="295" width="1" height="5" fill="#008080" />
<rect x="156" y="295" width="1" height="1" fill="#008080" />
<rect x="156" y="299" width="1" height="1" fill="#008080" />
<rect x="159" y="295" width="1" height="5" fill="#008080" />
<rect x="158" y="295" width="1" height="1" fill="#008080" />
<rect x="158" y="299" width="1" height="1" fill="#008080" />
<rect x="290" y="353" width="9" height="9" fill="#000" />
<rect x="291" y="354" width="7" height="7" fill="#FFFFCC" />
<rect x="292" y="355" width="1" height="5" fill="#FF00F0" />
<rect x="293" y="355" width="1" height="1" fill="#FF00F0" />
<rect x="293" y="359" width="1" height="1" fill="#FF00F0" />
<rect x="296" y="355" width="1" height="5" fill="#FF00F0" />
<rect x="295" y="355" width="1" height="1" fill="#FF00F0" />
<rect x="295" y="359" width="1" height="1" fill="#FF00F0" />
<rect x="731" y="317" width="9" height="9" fill="#000" />
<rect x="732" y="318" width="7" height="7" fill="#FFFFCC" />
<rect x="733" y="319" width="1" height="5" fill="#FF00F0" />
<rect x="734" y="319" width="1" height="1" fill="#FF00F0" />
<rect x="734" y="323" width="1" height="1" fill="#FF00F0" />
<rect x="737" y="319" width="1" height="5" fill="#FF00F0" />
<rect x="736" y="319" width="1" height="1" fill="#FF00F0" />
<rect x="736" y="323" width="1" height="1" fill="#FF00F0" />
<rect x="840" y="356" width="9" height="9" fill="#000" />
<rect x="841" y="357" width="7" height="7" fill="#FFFFCC" />
<rect x="842" y="358" width="1" height="5" fill="#FF00F0" />
<rect x="843" y="358" width="1" height="1" fill="#FF00F0" />
<rect x="843" y="362" width="1" height="1" fill="#FF00F0" />
<rect x="846" y="358" width="1" height="5" fill="#FF00F0" />
<rect x="845" y="358" width="1" height="1" fill="#FF00F0" />
<rect x="845" y="362" width="1" height="1" fill="#FF00F0" />
<rect x="153" y="255" width="16" height="12" fill="#008080" />
<rect x="155" y="257" width="12" height="8" fill="#FFFFCC" />
<rect x="156" y="259" width="10" height="1" fill="#008080" />
<rect x="157" y="260" width="8" height="1" fill="#008080" />
<rect x="158" y="261" width="6" height="1" fill="#008080" />
<rect x="159" y="262" width="4" height="1" fill="#008080" />
<rect x="160" y="263" width="2" height="1" fill="#008080" />
<rect x="833" y="255" width="16" height="12" fill="#008080" />
<rect x="835" y="257" width="12" height="8" fill="#FFFFCC" />
<rect x="840" y="258" width="2" height="1" fill="#008080" />
<rect x="839" y="259" width="4" height="1" fill="#008080" />
<rect x="838" y="260" width="6" height="1" fill="#008080" />
<rect x="837" y="261" width="8" height="1" fill="#008080" />
<rect x="836" y="262" width="10" height="1" fill="#008080" />
<rect x="368" y="346" width="8" height="12" fill="#008000" />
<rect x="369" y="347" width="6" height="10" fill="#FFFFCC" />
<text x="372" y="356" font-size="11" fill="#008000" font-weight="normal" text-anchor="middle" >?</text>
<rect x="467" y="312" width="8" height="12" fill="#0000FF" />
<rect x="468" y="313" width="6" height="10" fill="#FFFFCC" />
<text x="471" y="322" font-size="11" fill="#0000FF" font-weight="normal" text-anchor="middle" >?</text>
<rect x="599" y="315" width="8" height="12" fill="#FF00F0" />
<rect x="600" y="316" width="6" height="10" fill="#FFFFCC" />
<text x="603" y="325" font-size="11" fill="#FF00F0" font-weight="normal" text-anchor="middle" >?</text>
<rect x="509" y="181" width="62" height="15" fill="#000" />
<rect x="510" y="182" width="60" height="13" fill="#fff" />
<rect x="517" y="181" width="1" height="15" fill="#000" />
<rect x="562" y="181" width="1" height="15" fill="#000" />
<path d="M510.5,188.5 L517,184.5 L517,192.5 Z" fill="#000" stroke="none" stroke-width="1" shape-rendering="auto"/>
<path d="M569.5,188.5 L563,184.0 L563,193.0 Z" fill="#000" stroke="none" stroke-width="1" shape-rendering="auto"/>
<rect x="553" y="186" width="7" height="1" fill="#000" />
<rect x="554" y="187" width="5" height="1" fill="#000" />
<rect x="555" y="188" width="3" height="1" fill="#000" />
<rect x="556" y="189" width="1" height="1" fill="#000" />
<text x="521" y="193" font-size="11" fill="#000" font-weight="normal" text-anchor="start" textLength="21" lengthAdjust="spacingAndGlyphs" >True</text>
<rect x="546" y="214" width="72" height="15" fill="#000" />
<rect x="547" y="215" width="70" height="13" fill="#fff" />
<rect x="554" y="214" width="1" height="15" fill="#000" />
<rect x="609" y="214" width="1" height="15" fill="#000" />
<path d="M547.5,221.5 L554,217.5 L554,225.5 Z" fill="#000" stroke="none" stroke-width="1" shape-rendering="auto"/>
<path d="M616.5,221.5 L610,217.0 L610,226.0 Z" fill="#000" stroke="none" stroke-width="1" shape-rendering="auto"/>
<rect x="600" y="219" width="7" height="1" fill="#000" />
<rect x="601" y="220" width="5" height="1" fill="#000" />
<rect x="602" y="221" width="3" height="1" fill="#000" />
<rect x="603" y="222" width="1" height="1" fill="#000" />
<text x="558" y="226" font-size="11" fill="#000" font-weight="normal" text-anchor="start" textLength="34" lengthAdjust="spacingAndGlyphs" >Default</text>
<rect x="599" y="232" width="74" height="15" fill="#000" />
<rect x="600" y="233" width="72" height="13" fill="#fff" />
<rect x="607" y="232" width="1" height="15" fill="#000" />
<rect x="664" y="232" width="1" height="15" fill="#000" />
<path d="M600.5,239.5 L607,235.5 L607,243.5 Z" fill="#000" stroke="none" stroke-width="1" shape-rendering="auto"/>
<path d="M671.5,239.5 L665,235.0 L665,244.0 Z" fill="#000" stroke="none" stroke-width="1" shape-rendering="auto"/>
<rect x="655" y="237" width="7" height="1" fill="#000" />
<rect x="656" y="238" width="5" height="1" fill="#000" />
<rect x="657" y="239" width="3" height="1" fill="#000" />
<rect x="658" y="240" width="1" height="1" fill="#000" />
<text x="611" y="244" font-size="11" fill="#000" font-weight="normal" text-anchor="start" textLength="24" lengthAdjust="spacingAndGlyphs" >Error</text>
<rect x="49" y="274" width="80" height="15" fill="#000" />
<rect x="50" y="275" width="78" height="13" fill="#fff" />
<text x="50.5" y="286" font-size="11" fill="#000" font-weight="normal" text-anchor="start" textLength="76" lengthAdjust="spacingAndGlyphs" >aRefnumOfTask</text>
<rect x="49" y="337" width="88" height="15" fill="#000" />
<rect x="50" y="338" width="86" height="13" fill="#fff" />
<text x="50.5" y="349" font-size="11" fill="#000" font-weight="normal" text-anchor="start" textLength="84" lengthAdjust="spacingAndGlyphs" >error in (no error)</text>
<rect x="186" y="334" width="65" height="15" fill="#000" />
<rect x="187" y="335" width="63" height="13" fill="#fff" />
<text x="187.5" y="346" font-size="11" fill="#000" font-weight="normal" text-anchor="start" textLength="61" lengthAdjust="spacingAndGlyphs" >aPathOfTask</text>
<rect x="292" y="444" width="125" height="15" fill="#000" />
<rect x="293" y="445" width="123" height="13" fill="#fff" />
<text x="293.5" y="456" font-size="11" fill="#000" font-weight="normal" text-anchor="start" textLength="121" lengthAdjust="spacingAndGlyphs" >aPathOfTask (duplicated)</text>
<rect x="890" y="239" width="156" height="15" fill="#000" />
<rect x="891" y="240" width="154" height="13" fill="#fff" />
<text x="891.5" y="251" font-size="11" fill="#000" font-weight="normal" text-anchor="start" textLength="152" lengthAdjust="spacingAndGlyphs" >aRefnumOfTask (couldn't abort)</text>
<rect x="921" y="337" width="46" height="15" fill="#000" />
<rect x="922" y="338" width="44" height="13" fill="#fff" />
<text x="922.5" y="349" font-size="11" fill="#000" font-weight="normal" text-anchor="start" textLength="42" lengthAdjust="spacingAndGlyphs" >error out</text>
<rect x="415" y="505" width="46" height="15" fill="#000" />
<rect x="416" y="506" width="44" height="13" fill="#FFFFE1" />
<text x="416.5" y="516" font-size="11" fill="#000" font-weight="normal" text-anchor="start" textLength="42" lengthAdjust="spacingAndGlyphs" >For Loop</text>
<rect x="49" y="289" width="32" height="16" fill="#008080" />
<rect x="51" y="291" width="28" height="12" fill="#fff" />
<rect x="71" y="291" width="8" height="12" fill="#A6D2D2" />
<path d="M56.5,292.5 h-2 v9 h2" fill="none" stroke="#008080" stroke-width="1" shape-rendering="crispEdges"/>
<path d="M73.5,292.5 h2 v9 h-2" fill="none" stroke="#008080" stroke-width="1" shape-rendering="crispEdges"/>
<path d="M62.5,294.5 h3 l2,2 v3 h-5 z M65.5,294.5 v2 h2" fill="none" stroke="#008080" stroke-width="1" shape-rendering="crispEdges"/>
<path d="M76,293.5 l3.6,3.5 l-3.6,3.5 z" fill="#000" stroke="none" stroke-width="1" shape-rendering="auto"/>
<rect x="890" y="254" width="32" height="16" fill="#008080" />
<rect x="891" y="255" width="30" height="14" fill="#fff" />
<rect x="891" y="256" width="9" height="12" fill="#A6D2D2" />
<path d="M897.5,257.5 h-2 v9 h2" fill="none" stroke="#008080" stroke-width="1" shape-rendering="crispEdges"/>
<path d="M914.5,257.5 h2 v9 h-2" fill="none" stroke="#008080" stroke-width="1" shape-rendering="crispEdges"/>
<path d="M903.5,259.5 h3 l2,2 v3 h-5 z M906.5,259.5 v2 h2" fill="none" stroke="#008080" stroke-width="1" shape-rendering="crispEdges"/>
<path d="M894,258.5 l3.6,3.5 l-3.6,3.5 z" fill="#000" stroke="none" stroke-width="1" shape-rendering="auto"/>
<rect x="186" y="349" width="32" height="16" fill="#008080" />
<rect x="188" y="351" width="28" height="12" fill="#fff" />
<rect x="208" y="351" width="8" height="12" fill="#A6D2D2" />
<path d="M193.5,352.5 h-2 v9 h2" fill="none" stroke="#008080" stroke-width="1" shape-rendering="crispEdges"/>
<path d="M210.5,352.5 h2 v9 h-2" fill="none" stroke="#008080" stroke-width="1" shape-rendering="crispEdges"/>
<rect x="195" y="354" width="3" height="3" fill="#008080" />
<rect x="196" y="355" width="1" height="1" fill="#fff" />
<rect x="199" y="356" width="3" height="1" fill="#008080" />
<rect x="202" y="357" width="3" height="1" fill="#008080" />
<rect x="206" y="357" width="3" height="3" fill="#008080" />
<rect x="207" y="358" width="1" height="1" fill="#fff" />
<rect x="198" y="355" width="1" height="1" fill="#008080" />
<rect x="205" y="358" width="1" height="1" fill="#008080" />
<path d="M213,353.5 l3.6,3.5 l-3.6,3.5 z" fill="#000" stroke="none" stroke-width="1" shape-rendering="auto"/>
<rect x="292" y="459" width="32" height="16" fill="#008080" />
<rect x="293" y="460" width="30" height="14" fill="#fff" />
<rect x="293" y="461" width="9" height="12" fill="#A6D2D2" />
<path d="M299.5,462.5 h-2 v9 h2" fill="none" stroke="#008080" stroke-width="1" shape-rendering="crispEdges"/>
<path d="M316.5,462.5 h2 v9 h-2" fill="none" stroke="#008080" stroke-width="1" shape-rendering="crispEdges"/>
<rect x="301" y="464" width="3" height="3" fill="#008080" />
<rect x="302" y="465" width="1" height="1" fill="#fff" />
<rect x="305" y="466" width="3" height="1" fill="#008080" />
<rect x="308" y="467" width="3" height="1" fill="#008080" />
<rect x="312" y="467" width="3" height="3" fill="#008080" />
<rect x="313" y="468" width="1" height="1" fill="#fff" />
<rect x="304" y="465" width="1" height="1" fill="#008080" />
<rect x="311" y="468" width="1" height="1" fill="#008080" />
<path d="M296,463.5 l3.6,3.5 l-3.6,3.5 z" fill="#000" stroke="none" stroke-width="1" shape-rendering="auto"/>
<rect x="49" y="352" width="32" height="16" fill="#FF00F0" />
<rect x="51" y="354" width="28" height="12" fill="#fff" />
<rect x="52" y="355" width="26" height="10" fill="#FF00F0" />
<rect x="53" y="356" width="24" height="8" fill="#fff" />
<rect x="71" y="354" width="8" height="12" fill="#FF9CF2" />
<rect x="71" y="355" width="7" height="1" fill="#FF00F0" />
<rect x="71" y="364" width="7" height="1" fill="#FF00F0" />
<rect x="77" y="355" width="1" height="10" fill="#FF00F0" />
<rect x="58" y="357" width="5" height="3" fill="#FF00F0" />
<rect x="59" y="358" width="3" height="1" fill="#fff" />
<rect x="65" y="357" width="3" height="1" fill="#FF00F0" />
<rect x="57" y="361" width="3" height="2" fill="#FF00F0" />
<rect x="63" y="360" width="4" height="3" fill="#FF00F0" />
<rect x="70" y="360" width="3" height="3" fill="#FF00F0" />
<rect x="71" y="361" width="1" height="1" fill="#fff" />
<path d="M76,356.5 l3.6,3.5 l-3.6,3.5 z" fill="#000" stroke="none" stroke-width="1" shape-rendering="auto"/>
<rect x="921" y="352" width="32" height="16" fill="#FF00F0" />
<rect x="922" y="353" width="30" height="14" fill="#fff" />
<rect x="924" y="355" width="26" height="10" fill="#FF00F0" />
<rect x="925" y="356" width="24" height="8" fill="#fff" />
<rect x="922" y="354" width="9" height="12" fill="#FF9CF2" />
<rect x="924" y="355" width="7" height="1" fill="#FF00F0" />
<rect x="924" y="364" width="7" height="1" fill="#FF00F0" />
<rect x="924" y="355" width="1" height="10" fill="#FF00F0" />
<rect x="930" y="357" width="5" height="3" fill="#FF00F0" />
<rect x="931" y="358" width="3" height="1" fill="#fff" />
<rect x="937" y="357" width="3" height="1" fill="#FF00F0" />
<rect x="929" y="361" width="3" height="2" fill="#FF00F0" />
<rect x="935" y="360" width="4" height="3" fill="#FF00F0" />
<rect x="942" y="360" width="3" height="3" fill="#FF00F0" />
<rect x="943" y="361" width="1" height="1" fill="#fff" />
<path d="M925,356.5 l3.6,3.5 l-3.6,3.5 z" fill="#000" stroke="none" stroke-width="1" shape-rendering="auto"/>
<rect x="49" y="210" width="32" height="18" fill="#008080" />
<rect x="50" y="211" width="30" height="16" fill="#fff" />
<rect x="51" y="212" width="28" height="15" fill="#008080" />
<rect x="52" y="213" width="26" height="13" fill="#fff" />
<rect x="57" y="212" width="2" height="15" fill="#008080" />
<rect x="52" y="216" width="5" height="1" fill="#008080" />
<rect x="52" y="218" width="5" height="2" fill="#008080" />
<rect x="52" y="221" width="5" height="1" fill="#008080" />
<rect x="54" y="213" width="1" height="3" fill="#008080" />
<rect x="53" y="215" width="3" height="1" fill="#008080" />
<rect x="53" y="222" width="3" height="1" fill="#008080" />
<rect x="54" y="222" width="1" height="3" fill="#008080" />
<text x="59.5" y="224" font-size="11" fill="#000" font-weight="normal" text-anchor="start" >0</text>
<rect x="81" y="210" width="42" height="54" fill="#008080" />
<rect x="82" y="211" width="40" height="52" fill="#fff" />
<rect x="83" y="212" width="38" height="50" fill="#008080" />
<rect x="84" y="213" width="36" height="48" fill="#fff" />
<rect x="84" y="213" width="36" height="48" fill="#8CCACA" />
<rect x="85" y="214" width="34" height="46" fill="#fff" />
<path d="M110.5,213 V222.5 H119.5 M110.5,213.5 L119.5,222.5" fill="none" stroke="#8CCFCF" stroke-width="1" shape-rendering="auto"/>
<path d="M88.5,225.5 h18 l6,6 v25 h-24 z" fill="#F1F1F1" stroke="#8C8C8C" stroke-width="1" shape-rendering="auto"/>
<path d="M106.5,225.5 v6 h6" fill="none" stroke="#8C8C8C" stroke-width="1" shape-rendering="auto"/>
<path d="M106.5,225.5 l6,6 h-6 z" fill="#DCDCDC" stroke="none" stroke-width="1" shape-rendering="auto"/>
<rect x="91" y="234" width="18" height="14" fill="#808080" />
<rect x="92" y="235" width="16" height="12" fill="#E4E4E4" />
<rect x="93" y="236" width="2" height="2" fill="#55CC55" />
<rect x="96" y="236" width="2" height="2" fill="#EE6666" />
<rect x="99" y="236" width="2" height="2" fill="#808080" />
<rect x="104" y="236" width="3" height="2" fill="#808080" />
<rect x="93" y="239" width="10" height="5" fill="#808080" />
<path d="M93.5,242.5 l1.5,-2 l1.5,2 l1.5,-2 l1.5,2 l1.5,-2 l1,1.5" fill="none" stroke="#66DD66" stroke-width="1" shape-rendering="auto"/>
<rect x="104" y="240" width="3" height="1" fill="#808080" />
<rect x="104" y="243" width="3" height="1" fill="#808080" />
<rect x="93" y="245" width="6" height="1" fill="#808080" />
<rect x="101" y="245" width="2" height="1" fill="#808080" />
<rect x="105" y="247" width="4" height="1" fill="#EE5555" />
<rect x="105" y="251" width="4" height="1" fill="#6666EE" />
<rect x="114" y="249" width="4" height="1" fill="#EE5555" />
<path d="M107.5,245.5 v8 l7.5,-4 z" fill="#F4EC7C" stroke="#B0B098" stroke-width="1" shape-rendering="auto"/>
<rect x="109" y="249" width="3" height="1" fill="#909090" />
<rect x="110" y="248" width="1" height="3" fill="#909090" />
<rect x="185" y="293" width="52" height="34" fill="#000" />
<rect x="186" y="294" width="50" height="32" fill="#fff" />
<rect x="186" y="294" width="50" height="17" fill="#FFFFCC" />
<rect x="185" y="311" width="52" height="1" fill="#000" />
<path d="M189.5,295.5 h2 l2,2 v3 h-4 z M191.5,295.5 v2 h2" fill="none" stroke="#000" stroke-width="1" shape-rendering="crispEdges"/>
<rect x="189" y="304" width="3" height="1" fill="#000" />
<rect x="191" y="305" width="1" height="2" fill="#000" />
<rect x="190" y="307" width="1" height="1" fill="#000" />
<rect x="190" y="309" width="1" height="1" fill="#000" />
<rect x="192" y="304" width="2" height="4" fill="#000" />
<rect x="192" y="309" width="2" height="1" fill="#000" />
<path d="M229.5,295.5 h2 l2,2 v3 h-4 z M231.5,295.5 v2 h2" fill="none" stroke="#000" stroke-width="1" shape-rendering="crispEdges"/>
<rect x="229" y="304" width="3" height="1" fill="#000" />
<rect x="231" y="305" width="1" height="2" fill="#000" />
<rect x="230" y="307" width="1" height="1" fill="#000" />
<rect x="230" y="309" width="1" height="1" fill="#000" />
<rect x="232" y="304" width="2" height="4" fill="#000" />
<rect x="232" y="309" width="2" height="1" fill="#000" />
<text x="195" y="323" font-size="11" fill="#FF00F0" font-weight="normal" text-anchor="start" textLength="27" lengthAdjust="spacingAndGlyphs" >Name</text>
<path d="M232,314 l3.6,3.5 l-3.6,3.5 z" fill="#000" stroke="none" stroke-width="1" shape-rendering="auto"/>
<rect x="199" y="300" width="8" height="3" fill="#000" />
<rect x="206" y="298" width="4" height="7" fill="#000" />
<rect x="209" y="298" width="1" height="1" fill="#FFFFCC" />
<rect x="209" y="304" width="1" height="1" fill="#FFFFCC" />
<rect x="207" y="300" width="2" height="3" fill="#FFFFCC" />
<path d="M213.5,298 L215.5,305.2 L217.5,298" fill="none" stroke="#000" stroke-width="1.1" shape-rendering="auto"/>
<rect x="220" y="298" width="1" height="8" fill="#000" />
<rect x="219" y="298" width="3" height="1" fill="#000" />
<rect x="219" y="305" width="3" height="1" fill="#000" />
<rect x="391" y="293" width="62" height="34" fill="#000" />
<rect x="392" y="294" width="60" height="32" fill="#fff" />
<rect x="392" y="294" width="60" height="17" fill="#FFFFCC" />
<rect x="391" y="311" width="62" height="1" fill="#000" />
<path d="M395.5,295.5 h2 l2,2 v3 h-4 z M397.5,295.5 v2 h2" fill="none" stroke="#000" stroke-width="1" shape-rendering="crispEdges"/>
<rect x="395" y="304" width="3" height="1" fill="#000" />
<rect x="397" y="305" width="1" height="2" fill="#000" />
<rect x="396" y="307" width="1" height="1" fill="#000" />
<rect x="396" y="309" width="1" height="1" fill="#000" />
<rect x="398" y="304" width="2" height="4" fill="#000" />
<rect x="398" y="309" width="2" height="1" fill="#000" />
<path d="M445.5,295.5 h2 l2,2 v3 h-4 z M447.5,295.5 v2 h2" fill="none" stroke="#000" stroke-width="1" shape-rendering="crispEdges"/>
<rect x="445" y="304" width="3" height="1" fill="#000" />
<rect x="447" y="305" width="1" height="2" fill="#000" />
<rect x="446" y="307" width="1" height="1" fill="#000" />
<rect x="446" y="309" width="1" height="1" fill="#000" />
<rect x="448" y="304" width="2" height="4" fill="#000" />
<rect x="448" y="309" width="2" height="1" fill="#000" />
<text x="393" y="323" font-size="11" fill="#0000FF" font-weight="normal" text-anchor="start" textLength="53" lengthAdjust="spacingAndGlyphs" >Exec.State</text>
<path d="M448,314 l3.6,3.5 l-3.6,3.5 z" fill="#000" stroke="none" stroke-width="1" shape-rendering="auto"/>
<rect x="405" y="300" width="8" height="3" fill="#000" />
<rect x="412" y="298" width="4" height="7" fill="#000" />
<rect x="415" y="298" width="1" height="1" fill="#FFFFCC" />
<rect x="415" y="304" width="1" height="1" fill="#FFFFCC" />
<rect x="413" y="300" width="2" height="3" fill="#FFFFCC" />
<path d="M424.5,298 L426.5,305.2 L428.5,298" fill="none" stroke="#000" stroke-width="1.1" shape-rendering="auto"/>
<rect x="431" y="298" width="1" height="8" fill="#000" />
<rect x="430" y="298" width="3" height="1" fill="#000" />
<rect x="430" y="305" width="3" height="1" fill="#000" />
<rect x="483" y="293" width="52" height="34" fill="#000" />
<rect x="484" y="294" width="50" height="32" fill="#fff" />
<rect x="484" y="294" width="50" height="17" fill="#FFFFCC" />
<rect x="483" y="311" width="52" height="1" fill="#000" />
<path d="M487.5,295.5 h2 l2,2 v3 h-4 z M489.5,295.5 v2 h2" fill="none" stroke="#000" stroke-width="1" shape-rendering="crispEdges"/>
<rect x="487" y="304" width="3" height="1" fill="#000" />
<rect x="489" y="305" width="1" height="2" fill="#000" />
<rect x="488" y="307" width="1" height="1" fill="#000" />
<rect x="488" y="309" width="1" height="1" fill="#000" />
<rect x="490" y="304" width="2" height="4" fill="#000" />
<rect x="490" y="309" width="2" height="1" fill="#000" />
<path d="M527.5,295.5 h2 l2,2 v3 h-4 z M529.5,295.5 v2 h2" fill="none" stroke="#000" stroke-width="1" shape-rendering="crispEdges"/>
<rect x="527" y="304" width="3" height="1" fill="#000" />
<rect x="529" y="305" width="1" height="2" fill="#000" />
<rect x="528" y="307" width="1" height="1" fill="#000" />
<rect x="528" y="309" width="1" height="1" fill="#000" />
<rect x="530" y="304" width="2" height="4" fill="#000" />
<rect x="530" y="309" width="2" height="1" fill="#000" />
<text x="489" y="323" font-size="11" fill="#000" font-weight="normal" text-anchor="start" textLength="39" lengthAdjust="spacingAndGlyphs" >Abort VI</text>
<rect x="496" y="301" width="1" height="1" fill="#000" />
<rect x="498" y="301" width="2" height="1" fill="#000" />
<rect x="496" y="302" width="1" height="1" fill="#000" />
<rect x="498" y="302" width="2" height="1" fill="#000" />
<rect x="501" y="300" width="4" height="3" fill="#000" />
<path d="M504,296.5 l4.6,5 l-4.6,5 z" fill="#000" stroke="none" stroke-width="1" shape-rendering="auto"/>
<path d="M511.5,298 L513.5,305.2 L515.5,298" fill="none" stroke="#000" stroke-width="1.1" shape-rendering="auto"/>
<rect x="518" y="298" width="1" height="8" fill="#000" />
<rect x="517" y="298" width="3" height="1" fill="#000" />
<rect x="517" y="305" width="3" height="1" fill="#000" />
<rect x="555" y="293" width="32" height="32" fill="#000" />
<rect x="556" y="294" width="30" height="30" fill="#FFFFCC" />
<text x="557.5" y="322" font-size="13" fill="#000" font-weight="bold" text-anchor="start" textLength="7" lengthAdjust="spacingAndGlyphs" >c</text>
<path d="M570.5,312.5 h4 l3,3 v6 h-7 z M574.5,312.5 v3 h3" fill="#FFFFCC" stroke="#000" stroke-width="1.2" shape-rendering="crispEdges"/>
<ellipse cx="562.5" cy="304.5" rx="3.8" ry="4" fill="url(#chk4)" stroke="url(#chk)" stroke-width="2"/>
<ellipse cx="579" cy="304.5" rx="4.8" ry="4" fill="url(#chk4)" stroke="url(#chk)" stroke-width="2"/>
<rect x="568" y="309" width="1" height="1" fill="#000" />
<rect x="568" y="308" width="2" height="1" fill="#000" />
<rect x="569" y="307" width="1" height="1" fill="#000" />
<rect x="569" y="305" width="1" height="1" fill="#000" />
<rect x="570" y="304" width="2" height="1" fill="#000" />
<rect x="570" y="303" width="1" height="1" fill="#000" />
<rect x="571" y="301" width="1" height="1" fill="#000" />
<rect x="571" y="300" width="2" height="1" fill="#000" />
<rect x="620" y="257" width="32" height="17" fill="#000" />
<rect x="621" y="258" width="30" height="15" fill="#FFFFCC" />
<rect x="622" y="259" width="9" height="5" fill="#000" />
<rect x="623" y="260" width="7" height="3" fill="#FFFFCC" />
<rect x="626" y="259" width="1" height="5" fill="#000" />
<rect x="624" y="261" width="1" height="1" fill="#000" />
<rect x="628" y="261" width="1" height="1" fill="#000" />
<rect x="631" y="261" width="1" height="1" fill="#000" />
<rect x="633" y="261" width="3" height="1" fill="#000" />
<rect x="634" y="260" width="1" height="3" fill="#000" />
<rect x="623" y="267" width="5" height="5" fill="#000" />
<rect x="624" y="268" width="3" height="3" fill="#FFFFCC" />
<rect x="629" y="269" width="1" height="1" fill="#000" />
<rect x="631" y="269" width="1" height="1" fill="#000" />
<rect x="633" y="269" width="3" height="1" fill="#000" />
<rect x="634" y="268" width="1" height="3" fill="#000" />
<rect x="637" y="260" width="1" height="11" fill="#000" />
<rect x="638" y="259" width="1" height="1" fill="#000" />
<rect x="638" y="271" width="1" height="1" fill="#000" />
<rect x="640" y="259" width="9" height="13" fill="#000" />
<rect x="641" y="260" width="7" height="11" fill="#FFFFE0" />
<rect x="644" y="259" width="1" height="13" fill="#000" />
<rect x="640" y="263" width="9" height="1" fill="#000" />
<rect x="640" y="267" width="9" height="1" fill="#000" />
<path d="M331.5,342.5 L351.5,352.5 L331.5,362.5 Z" fill="#FFFFCC" stroke="#000" stroke-width="1" shape-rendering="auto"/>
<rect x="334" y="350" width="7" height="2" fill="#000" />
<rect x="334" y="353" width="7" height="2" fill="#000" />
<path d="M252.5,352.5 H274.5 L276.5,354.5 V360.5 L274.5,362.5 H252.5 L254.5,360.5 V354.5 Z" fill="#FFFFCC" stroke="#000" stroke-width="1" shape-rendering="crispEdges"/>
<rect x="256" y="354" width="3" height="3" fill="#000" />
<rect x="257" y="355" width="1" height="1" fill="#FFFFCC" />
<rect x="259" y="357" width="1" height="1" fill="#000" />
<rect x="260" y="358" width="3" height="3" fill="#000" />
<rect x="261" y="359" width="1" height="1" fill="#FFFFCC" />
<rect x="265" y="358" width="1" height="2" fill="#000" />
<rect x="266" y="357" width="2" height="1" fill="#000" />
<rect x="266" y="360" width="2" height="1" fill="#000" />
<rect x="267" y="358" width="1" height="2" fill="#000" />
<rect x="269" y="355" width="1" height="6" fill="#000" />
<rect x="270" y="357" width="2" height="1" fill="#000" />
<rect x="270" y="360" width="2" height="1" fill="#000" />
<rect x="271" y="358" width="1" height="2" fill="#000" />
<rect x="273" y="357" width="2" height="1" fill="#000" />
<rect x="273" y="358" width="1" height="2" fill="#000" />
<rect x="273" y="360" width="2" height="1" fill="#000" />
<rect x="779" y="332" width="32" height="32" fill="#000" />
<rect x="780" y="333" width="30" height="30" fill="#fff" />
<text x="781" y="343" font-size="12" fill="#000" font-weight="bold" text-anchor="start" textLength="9.5" lengthAdjust="spacingAndGlyphs" >?!</text>
<text x="781" y="362" font-size="12" fill="#000" font-weight="bold" text-anchor="start" textLength="9.5" lengthAdjust="spacingAndGlyphs" >?!</text>
<text x="800" y="353" font-size="12" fill="#000" font-weight="bold" text-anchor="start" textLength="9.5" lengthAdjust="spacingAndGlyphs" >?!</text>
<path d="M791.5,335.5 L798,342" fill="none" stroke="#000" stroke-width="2.4" shape-rendering="auto"/>
<path d="M794,343 H800 M799,344 V338" fill="none" stroke="#000" stroke-width="2" shape-rendering="crispEdges"/>
<path d="M791.5,360.5 L798,354" fill="none" stroke="#000" stroke-width="2.4" shape-rendering="auto"/>
<path d="M794,353 H800 M799,352 V358" fill="none" stroke="#000" stroke-width="2" shape-rendering="crispEdges"/>
<rect x="876" y="332" width="32" height="32" fill="#000" />
<rect x="877" y="333" width="30" height="30" fill="#fff" />
<text x="878" y="343" font-size="12" fill="#000" font-weight="bold" text-anchor="start" textLength="9.5" lengthAdjust="spacingAndGlyphs" >?!</text>
<text x="878" y="362" font-size="12" fill="#000" font-weight="bold" text-anchor="start" textLength="9.5" lengthAdjust="spacingAndGlyphs" >?!</text>
<text x="897" y="353" font-size="12" fill="#000" font-weight="bold" text-anchor="start" textLength="9.5" lengthAdjust="spacingAndGlyphs" >?!</text>
<path d="M888.5,335.5 L895,342" fill="none" stroke="#000" stroke-width="2.4" shape-rendering="auto"/>
<path d="M891,343 H897 M896,344 V338" fill="none" stroke="#000" stroke-width="2" shape-rendering="crispEdges"/>
<path d="M888.5,360.5 L895,354" fill="none" stroke="#000" stroke-width="2.4" shape-rendering="auto"/>
<path d="M891,353 H897 M896,352 V358" fill="none" stroke="#000" stroke-width="2" shape-rendering="crispEdges"/>
</g>
<rect x="1100" y="78" width="17" height="490" fill="url(#vtrack)" />
<rect x="1116" y="78" width="1" height="490" fill="#ECEBE0" />
<rect x="6" y="568" width="1094" height="17" fill="url(#htrack)" />
<rect x="1100" y="568" width="19" height="19" fill="#ECE9D8" />
<rect x="1117" y="78" width="2" height="490" fill="#FBFAF2" />
<rect x="4" y="585" width="1096" height="2" fill="#F6F5EA" />
<rect x="1101.5" y="78.5" width="14" height="15" rx="2" ry="2" fill="url(#sbtn)" stroke="#fff" stroke-width="1" shape-rendering="auto"/>
<rect x="1101.5" y="552.5" width="14" height="15" rx="2" ry="2" fill="url(#sbtn)" stroke="#fff" stroke-width="1" shape-rendering="auto"/>
<rect x="75.5" y="569.5" width="15" height="14" rx="2" ry="2" fill="url(#sbtn)" stroke="#fff" stroke-width="1" shape-rendering="auto"/>
<rect x="1084.5" y="569.5" width="15" height="14" rx="2" ry="2" fill="url(#sbtn)" stroke="#fff" stroke-width="1" shape-rendering="auto"/>
<rect x="1103" y="94" width="11" height="1" fill="#9DB5E8" />
<rect x="77" y="584" width="12" height="1" fill="#9DB5E8" />
<rect x="1086" y="584" width="12" height="1" fill="#9DB5E8" />
<path d="M1104.5,89 l4,-4 l4,4" fill="none" stroke="#4D6185" stroke-width="2.2" shape-rendering="auto"/>
<path d="M1104.5,558 l4,4 l4,-4" fill="none" stroke="#4D6185" stroke-width="2.2" shape-rendering="auto"/>
<path d="M85,572.5 l-4,4 l4,4" fill="none" stroke="#4D6185" stroke-width="2.2" shape-rendering="auto"/>
<path d="M1090,572.5 l4,4 l-4,4" fill="none" stroke="#4D6185" stroke-width="2.2" shape-rendering="auto"/>
<rect x="1101.5" y="131.5" width="14" height="378" rx="2" ry="2" fill="url(#vthumb)" stroke="#fff" stroke-width="1" shape-rendering="auto"/>
<rect x="240.5" y="569.5" width="700" height="14" rx="2" ry="2" fill="url(#hthumb)" stroke="#fff" stroke-width="1" shape-rendering="auto"/>
<rect x="242" y="584" width="698" height="1" fill="#9DB2D6" />
<rect x="941" y="571" width="1" height="12" fill="#86A4DC" />
<rect x="1116" y="133" width="1" height="376" fill="#9DB2D6" />
<rect x="1103" y="510" width="12" height="1" fill="#86A4DC" />
<rect x="1105" y="317" width="6" height="1" fill="#EEF4FE" />
<rect x="1106" y="318" width="6" height="1" fill="#8CAAF0" />
<rect x="587" y="573" width="1" height="6" fill="#EEF4FE" />
<rect x="588" y="574" width="1" height="6" fill="#8CAAF0" />
<rect x="1105" y="319" width="6" height="1" fill="#EEF4FE" />
<rect x="1106" y="320" width="6" height="1" fill="#8CAAF0" />
<rect x="589" y="573" width="1" height="6" fill="#EEF4FE" />
<rect x="590" y="574" width="1" height="6" fill="#8CAAF0" />
<rect x="1105" y="321" width="6" height="1" fill="#EEF4FE" />
<rect x="1106" y="322" width="6" height="1" fill="#8CAAF0" />
<rect x="591" y="573" width="1" height="6" fill="#EEF4FE" />
<rect x="592" y="574" width="1" height="6" fill="#8CAAF0" />
<rect x="1105" y="323" width="6" height="1" fill="#EEF4FE" />
<rect x="1106" y="324" width="6" height="1" fill="#8CAAF0" />
<rect x="593" y="573" width="1" height="6" fill="#EEF4FE" />
<rect x="594" y="574" width="1" height="6" fill="#8CAAF0" />
<rect x="6" y="568" width="70" height="17" fill="#000" />
<rect x="7" y="569" width="68" height="15" fill="#fff" />
<rect x="75" y="568" width="1" height="17" fill="#fff" />
<text x="9" y="579" font-size="11" fill="#000" font-weight="normal" text-anchor="start" textLength="63" lengthAdjust="spacingAndGlyphs" >My Computer</text>
<rect x="1114" y="574" width="2" height="2" fill="#B8B4A0" />
<rect x="1110" y="578" width="2" height="2" fill="#B8B4A0" />
<rect x="1114" y="578" width="2" height="2" fill="#B8B4A0" />
<rect x="1106" y="582" width="2" height="2" fill="#B8B4A0" />
<rect x="1110" y="582" width="2" height="2" fill="#B8B4A0" />
<rect x="1114" y="582" width="2" height="2" fill="#B8B4A0" />
</svg>
</body></html>
